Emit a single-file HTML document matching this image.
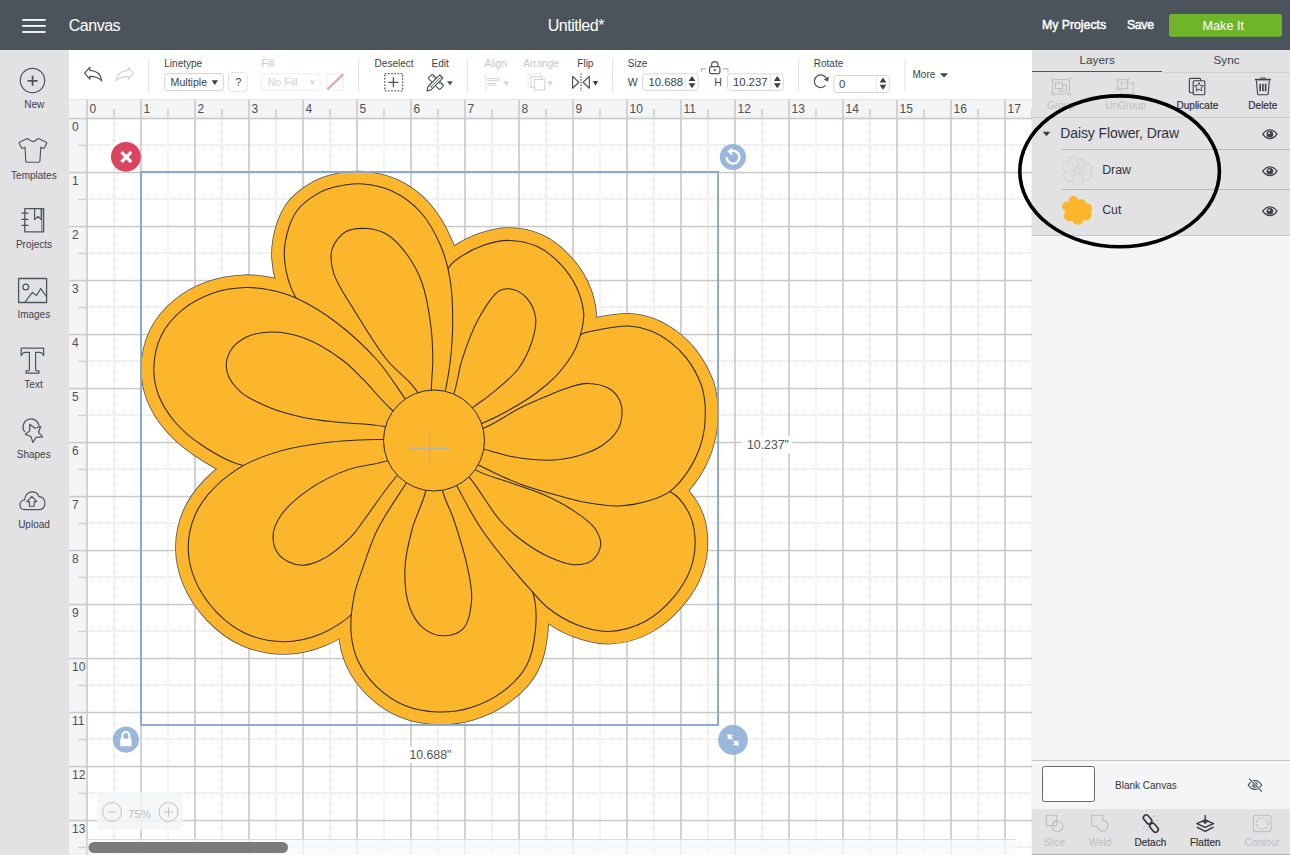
<!DOCTYPE html>
<html><head><meta charset="utf-8">
<style>
*{margin:0;padding:0;box-sizing:border-box}
html,body{width:1290px;height:855px;overflow:hidden;background:#fff;font-family:"Liberation Sans",sans-serif;color:#3a3f45}
.abs{position:absolute}
.t{position:absolute;white-space:nowrap;line-height:1}
#hdr{left:0;top:0;width:1290px;height:50px;background:#4b545c}
#side{left:0;top:50px;width:69px;height:805px;background:#e2e2e4}
#tb{left:69px;top:50px;width:963px;height:50px;background:#fff;border-bottom:1px solid #e3e3e5}
#rp{left:1032px;top:50px;width:258px;height:805px;background:#f4f5f7}
.lbl{position:absolute;white-space:nowrap;line-height:1;font-size:10px;color:#3c4148}
.dis{color:#c3c5c8}
.sico{position:absolute;left:0;width:69px}
.stxt{position:absolute;left:0;width:69px;text-align:center;font-size:10px;color:#3c4148;line-height:1}
.inp{position:absolute;border:1px solid #d9dadc;border-radius:3px;background:#fff}
.sep{position:absolute;top:8px;width:1px;height:34px;background:#e0e0e2}
</style></head>
<body>
<svg class="abs" style="left:0;top:0" width="1290" height="855" viewBox="0 0 1290 855" font-family="Liberation Sans, sans-serif">
<rect x="69" y="100" width="963" height="17.5" fill="#f3f4f6"/>
<rect x="69" y="100" width="17.5" height="755" fill="#f3f4f6"/>
<defs><pattern id="chk" patternUnits="userSpaceOnUse" width="2" height="2"><rect x="0" y="0" width="1" height="1" fill="#e6e6e6"/><rect x="1" y="1" width="1" height="1" fill="#e6e6e6"/></pattern></defs>
<rect x="113" y="117" width="2" height="738" fill="url(#chk)"/>
<rect x="167" y="117" width="2" height="738" fill="url(#chk)"/>
<rect x="221" y="117" width="2" height="738" fill="url(#chk)"/>
<rect x="275" y="117" width="2" height="738" fill="url(#chk)"/>
<rect x="329" y="117" width="2" height="738" fill="url(#chk)"/>
<rect x="383" y="117" width="2" height="738" fill="url(#chk)"/>
<rect x="437" y="117" width="2" height="738" fill="url(#chk)"/>
<rect x="491" y="117" width="2" height="738" fill="url(#chk)"/>
<rect x="545" y="117" width="2" height="738" fill="url(#chk)"/>
<rect x="599" y="117" width="2" height="738" fill="url(#chk)"/>
<rect x="653" y="117" width="2" height="738" fill="url(#chk)"/>
<rect x="707" y="117" width="2" height="738" fill="url(#chk)"/>
<rect x="761" y="117" width="2" height="738" fill="url(#chk)"/>
<rect x="815" y="117" width="2" height="738" fill="url(#chk)"/>
<rect x="869" y="117" width="2" height="738" fill="url(#chk)"/>
<rect x="923" y="117" width="2" height="738" fill="url(#chk)"/>
<rect x="977" y="117" width="2" height="738" fill="url(#chk)"/>
<rect x="1031" y="117" width="2" height="738" fill="url(#chk)"/>
<rect x="87" y="144" width="945" height="2" fill="url(#chk)"/>
<rect x="87" y="198" width="945" height="2" fill="url(#chk)"/>
<rect x="87" y="252" width="945" height="2" fill="url(#chk)"/>
<rect x="87" y="306" width="945" height="2" fill="url(#chk)"/>
<rect x="87" y="360" width="945" height="2" fill="url(#chk)"/>
<rect x="87" y="414" width="945" height="2" fill="url(#chk)"/>
<rect x="87" y="468" width="945" height="2" fill="url(#chk)"/>
<rect x="87" y="522" width="945" height="2" fill="url(#chk)"/>
<rect x="87" y="576" width="945" height="2" fill="url(#chk)"/>
<rect x="87" y="630" width="945" height="2" fill="url(#chk)"/>
<rect x="87" y="684" width="945" height="2" fill="url(#chk)"/>
<rect x="87" y="738" width="945" height="2" fill="url(#chk)"/>
<rect x="87" y="792" width="945" height="2" fill="url(#chk)"/>
<rect x="87" y="846" width="945" height="2" fill="url(#chk)"/>
<rect x="87" y="116.5" width="945" height="2" fill="url(#chk)"/>
<rect x="86" y="100" width="2" height="755" fill="#d2d2d2"/>
<rect x="140" y="100" width="2" height="755" fill="#d2d2d2"/>
<rect x="194" y="100" width="2" height="755" fill="#d2d2d2"/>
<rect x="248" y="100" width="2" height="755" fill="#d2d2d2"/>
<rect x="302" y="100" width="2" height="755" fill="#d2d2d2"/>
<rect x="356" y="100" width="2" height="755" fill="#d2d2d2"/>
<rect x="410" y="100" width="2" height="755" fill="#d2d2d2"/>
<rect x="464" y="100" width="2" height="755" fill="#d2d2d2"/>
<rect x="518" y="100" width="2" height="755" fill="#d2d2d2"/>
<rect x="572" y="100" width="2" height="755" fill="#d2d2d2"/>
<rect x="626" y="100" width="2" height="755" fill="#d2d2d2"/>
<rect x="680" y="100" width="2" height="755" fill="#d2d2d2"/>
<rect x="734" y="100" width="2" height="755" fill="#d2d2d2"/>
<rect x="788" y="100" width="2" height="755" fill="#d2d2d2"/>
<rect x="842" y="100" width="2" height="755" fill="#d2d2d2"/>
<rect x="896" y="100" width="2" height="755" fill="#d2d2d2"/>
<rect x="950" y="100" width="2" height="755" fill="#d2d2d2"/>
<rect x="1004" y="100" width="2" height="755" fill="#d2d2d2"/>
<rect x="69" y="117.8" width="963" height="1.5" fill="#c9c9c9"/>
<rect x="69" y="171.8" width="963" height="1.5" fill="#c9c9c9"/>
<rect x="69" y="225.8" width="963" height="1.5" fill="#c9c9c9"/>
<rect x="69" y="279.8" width="963" height="1.5" fill="#c9c9c9"/>
<rect x="69" y="333.8" width="963" height="1.5" fill="#c9c9c9"/>
<rect x="69" y="387.8" width="963" height="1.5" fill="#c9c9c9"/>
<rect x="69" y="441.8" width="963" height="1.5" fill="#c9c9c9"/>
<rect x="69" y="495.8" width="963" height="1.5" fill="#c9c9c9"/>
<rect x="69" y="549.8" width="963" height="1.5" fill="#c9c9c9"/>
<rect x="69" y="603.8" width="963" height="1.5" fill="#c9c9c9"/>
<rect x="69" y="657.8" width="963" height="1.5" fill="#c9c9c9"/>
<rect x="69" y="711.8" width="963" height="1.5" fill="#c9c9c9"/>
<rect x="69" y="765.8" width="963" height="1.5" fill="#c9c9c9"/>
<rect x="69" y="819.8" width="963" height="1.5" fill="#c9c9c9"/>
<rect x="113.2" y="109" width="1.6" height="8.5" fill="#d0d0d0"/>
<rect x="167.2" y="109" width="1.6" height="8.5" fill="#d0d0d0"/>
<rect x="221.2" y="109" width="1.6" height="8.5" fill="#d0d0d0"/>
<rect x="275.2" y="109" width="1.6" height="8.5" fill="#d0d0d0"/>
<rect x="329.2" y="109" width="1.6" height="8.5" fill="#d0d0d0"/>
<rect x="383.2" y="109" width="1.6" height="8.5" fill="#d0d0d0"/>
<rect x="437.2" y="109" width="1.6" height="8.5" fill="#d0d0d0"/>
<rect x="491.2" y="109" width="1.6" height="8.5" fill="#d0d0d0"/>
<rect x="545.2" y="109" width="1.6" height="8.5" fill="#d0d0d0"/>
<rect x="599.2" y="109" width="1.6" height="8.5" fill="#d0d0d0"/>
<rect x="653.2" y="109" width="1.6" height="8.5" fill="#d0d0d0"/>
<rect x="707.2" y="109" width="1.6" height="8.5" fill="#d0d0d0"/>
<rect x="761.2" y="109" width="1.6" height="8.5" fill="#d0d0d0"/>
<rect x="815.2" y="109" width="1.6" height="8.5" fill="#d0d0d0"/>
<rect x="869.2" y="109" width="1.6" height="8.5" fill="#d0d0d0"/>
<rect x="923.2" y="109" width="1.6" height="8.5" fill="#d0d0d0"/>
<rect x="977.2" y="109" width="1.6" height="8.5" fill="#d0d0d0"/>
<rect x="1031.2" y="109" width="1.6" height="8.5" fill="#d0d0d0"/>
<rect x="78" y="144.8" width="9" height="1.4" fill="#d0d0d0"/>
<rect x="78" y="198.8" width="9" height="1.4" fill="#d0d0d0"/>
<rect x="78" y="252.8" width="9" height="1.4" fill="#d0d0d0"/>
<rect x="78" y="306.8" width="9" height="1.4" fill="#d0d0d0"/>
<rect x="78" y="360.8" width="9" height="1.4" fill="#d0d0d0"/>
<rect x="78" y="414.8" width="9" height="1.4" fill="#d0d0d0"/>
<rect x="78" y="468.8" width="9" height="1.4" fill="#d0d0d0"/>
<rect x="78" y="522.8" width="9" height="1.4" fill="#d0d0d0"/>
<rect x="78" y="576.8" width="9" height="1.4" fill="#d0d0d0"/>
<rect x="78" y="630.8" width="9" height="1.4" fill="#d0d0d0"/>
<rect x="78" y="684.8" width="9" height="1.4" fill="#d0d0d0"/>
<rect x="78" y="738.8" width="9" height="1.4" fill="#d0d0d0"/>
<rect x="78" y="792.8" width="9" height="1.4" fill="#d0d0d0"/>
<rect x="78" y="846.8" width="9" height="1.4" fill="#d0d0d0"/>
<rect x="69" y="100" width="17" height="17" fill="#f3f4f6"/>
<text x="89.5" y="113" font-size="12" fill="#505050">0</text>
<text x="143.5" y="113" font-size="12" fill="#505050">1</text>
<text x="197.5" y="113" font-size="12" fill="#505050">2</text>
<text x="251.5" y="113" font-size="12" fill="#505050">3</text>
<text x="305.5" y="113" font-size="12" fill="#505050">4</text>
<text x="359.5" y="113" font-size="12" fill="#505050">5</text>
<text x="413.5" y="113" font-size="12" fill="#505050">6</text>
<text x="467.5" y="113" font-size="12" fill="#505050">7</text>
<text x="521.5" y="113" font-size="12" fill="#505050">8</text>
<text x="575.5" y="113" font-size="12" fill="#505050">9</text>
<text x="629.5" y="113" font-size="12" fill="#505050">10</text>
<text x="683.5" y="113" font-size="12" fill="#505050">11</text>
<text x="737.5" y="113" font-size="12" fill="#505050">12</text>
<text x="791.5" y="113" font-size="12" fill="#505050">13</text>
<text x="845.5" y="113" font-size="12" fill="#505050">14</text>
<text x="899.5" y="113" font-size="12" fill="#505050">15</text>
<text x="953.5" y="113" font-size="12" fill="#505050">16</text>
<text x="1007.5" y="113" font-size="12" fill="#505050">17</text>
<text x="72" y="130.5" font-size="12" fill="#505050">0</text>
<text x="72" y="184.5" font-size="12" fill="#505050">1</text>
<text x="72" y="238.5" font-size="12" fill="#505050">2</text>
<text x="72" y="292.5" font-size="12" fill="#505050">3</text>
<text x="72" y="346.5" font-size="12" fill="#505050">4</text>
<text x="72" y="400.5" font-size="12" fill="#505050">5</text>
<text x="72" y="454.5" font-size="12" fill="#505050">6</text>
<text x="72" y="508.5" font-size="12" fill="#505050">7</text>
<text x="72" y="562.5" font-size="12" fill="#505050">8</text>
<text x="72" y="616.5" font-size="12" fill="#505050">9</text>
<text x="72" y="670.5" font-size="12" fill="#505050">10</text>
<text x="72" y="724.5" font-size="12" fill="#505050">11</text>
<text x="72" y="778.5" font-size="12" fill="#505050">12</text>
<text x="72" y="832.5" font-size="12" fill="#505050">13</text>
<g fill="none" stroke-linejoin="miter" stroke-miterlimit="20">
<path d="M434.00,440.50 C437.62,432.77 414.67,412.14 405.00,398.50 C395.67,385.33 387.99,372.31 377.00,360.00 C364.98,346.54 349.29,332.18 335.00,321.50 C322.23,311.95 307.99,303.36 296.00,298.00 C286.73,293.86 278.67,291.75 270.00,290.00 C261.67,288.32 253.89,287.16 245.00,287.50 C234.74,287.90 222.42,289.70 212.00,293.40 C201.52,297.12 190.78,302.73 182.30,309.80 C173.91,316.80 166.05,325.80 161.30,335.50 C156.52,345.25 154.02,357.69 153.80,368.20 C153.59,377.90 155.57,387.45 159.00,396.30 C162.53,405.41 168.35,414.18 175.00,422.00 C182.03,430.27 190.44,437.55 200.50,444.30 C212.36,452.25 227.72,462.34 242.60,465.30 C257.55,468.28 274.02,463.67 290.00,462.00 C306.47,460.28 323.93,457.95 340.00,455.00 C355.20,452.21 368.78,447.40 384.00,445.00 C400.05,442.47 430.41,448.17 434.00,440.50Z" stroke="#555" stroke-width="26.2"/>
<path d="M434.00,440.50 C426.41,443.72 411.93,430.45 400.00,420.00 C381.44,403.75 358.85,366.78 340.00,345.00 C324.56,327.17 305.20,314.15 296.00,298.00 C288.62,285.04 285.29,270.64 284.40,258.20 C283.64,247.53 285.98,236.68 288.70,228.00 C290.95,220.81 294.03,214.55 298.10,209.30 C301.93,204.36 307.24,200.46 312.10,197.10 C316.60,193.99 320.96,191.57 326.10,189.60 C331.76,187.43 338.52,185.93 344.80,185.00 C350.99,184.08 356.67,183.36 363.50,184.00 C372.04,184.81 382.85,186.79 391.90,191.00 C401.77,195.60 412.03,202.78 420.00,211.50 C428.64,220.95 435.89,234.46 441.00,246.50 C445.82,257.86 448.43,269.26 450.40,281.60 C452.52,294.89 452.76,310.19 452.70,323.70 C452.65,336.25 451.70,348.41 450.40,360.00 C449.19,370.77 447.65,379.50 445.40,391.00 C442.54,405.62 442.59,436.86 434.00,440.50Z" stroke="#555" stroke-width="26.2"/>
<path d="M434.00,440.50 C427.45,435.74 434.26,415.33 435.00,400.00 C435.97,379.83 437.73,352.52 440.00,330.00 C442.13,308.88 441.65,281.06 448.00,268.80 C451.53,261.99 456.55,259.65 462.00,255.90 C468.06,251.72 475.54,247.97 483.10,245.40 C491.05,242.70 499.97,240.34 508.70,240.40 C517.85,240.46 528.25,242.43 536.80,246.30 C545.43,250.20 553.56,256.93 560.20,263.80 C566.76,270.59 572.57,278.86 576.50,287.20 C580.30,295.26 583.01,306.21 583.70,312.90 C584.13,317.06 583.50,319.69 583.00,323.20 C582.47,326.95 581.66,330.71 580.50,334.70 C579.19,339.23 577.46,344.39 575.30,348.90 C573.15,353.38 570.51,357.52 567.60,361.70 C564.54,366.09 561.18,370.45 557.30,374.60 C553.12,379.07 548.12,383.44 543.20,387.50 C538.26,391.58 534.43,394.73 527.70,399.00 C516.65,406.01 497.61,416.66 481.90,423.60 C466.37,430.46 441.34,445.83 434.00,440.50Z" stroke="#555" stroke-width="26.2"/>
<path d="M434.00,440.50 C433.79,426.71 495.70,406.73 520.00,390.00 C539.47,376.60 560.12,360.78 570.00,350.00 C575.24,344.28 575.28,338.41 580.00,335.00 C585.07,331.34 592.71,330.95 600.00,329.50 C608.52,327.81 619.44,325.68 628.10,326.00 C635.63,326.28 642.29,327.67 649.10,330.20 C656.35,332.89 663.86,337.29 670.20,342.10 C676.48,346.87 682.05,352.33 687.00,358.90 C692.46,366.15 698.09,376.57 701.00,384.20 C703.18,389.91 703.89,394.77 704.60,400.00 C705.29,405.03 705.37,410.00 705.30,415.00 C705.23,420.00 705.01,424.88 704.20,430.00 C703.32,435.53 702.18,441.01 700.00,447.00 C697.33,454.31 693.37,463.11 688.50,470.40 C683.45,477.95 676.99,486.26 670.00,491.40 C663.65,496.07 656.74,498.44 648.90,500.80 C639.84,503.53 629.02,505.62 618.50,505.90 C607.24,506.20 593.86,503.78 583.40,501.90 C574.76,500.34 568.80,498.52 560.00,496.10 C548.41,492.91 533.17,488.98 520.00,484.00 C506.49,478.89 493.67,472.56 480.00,465.70 C465.07,458.21 434.15,450.50 434.00,440.50Z" stroke="#555" stroke-width="26.2"/>
<path d="M434.00,440.50 C442.56,430.41 522.42,471.83 560.00,480.00 C589.36,486.38 619.54,487.99 640.00,490.00 C652.68,491.24 662.67,488.12 670.90,492.20 C678.51,495.97 684.38,504.50 688.40,512.10 C692.42,519.70 694.49,528.82 695.00,537.80 C695.55,547.46 694.13,558.58 690.80,568.20 C687.38,578.11 681.62,587.70 674.40,596.30 C666.41,605.81 655.21,616.14 644.00,622.00 C633.29,627.60 620.44,631.10 608.90,631.40 C597.82,631.68 586.31,628.36 576.10,624.40 C566.06,620.51 555.61,613.86 548.10,608.00 C542.10,603.32 539.71,600.04 533.60,593.20 C521.47,579.63 495.52,549.53 482.10,530.00 C471.66,514.81 465.51,501.88 457.60,487.20 C449.46,472.08 428.61,446.85 434.00,440.50Z" stroke="#555" stroke-width="26.2"/>
<path d="M434.00,440.50 C451.12,440.00 482.54,501.82 500.00,530.00 C514.21,552.93 528.51,576.56 533.60,595.50 C537.12,608.58 536.55,618.99 535.40,630.60 C534.23,642.39 531.99,655.49 526.50,665.70 C521.12,675.70 512.29,684.43 503.10,691.40 C493.67,698.55 481.61,704.38 470.40,707.80 C459.74,711.05 448.49,712.38 437.60,712.00 C426.66,711.62 415.01,709.67 404.90,705.50 C394.73,701.30 384.67,694.36 376.80,686.80 C369.15,679.45 362.40,670.22 358.10,661.00 C354.01,652.23 351.92,643.09 351.10,633.00 C350.16,621.48 351.89,607.22 354.20,595.50 C356.32,584.71 360.16,575.54 363.80,565.10 C367.75,553.76 371.16,542.20 377.20,530.00 C384.46,515.33 396.21,498.90 405.80,483.80 C415.15,469.08 422.33,440.84 434.00,440.50Z" stroke="#555" stroke-width="26.2"/>
<path d="M434.00,440.50 C441.92,454.12 392.80,510.50 380.00,540.00 C370.43,562.05 365.67,587.30 360.00,600.00 C357.19,606.29 356.49,609.05 352.30,613.50 C345.85,620.36 332.69,629.01 321.40,633.70 C309.87,638.50 296.26,641.70 283.70,641.70 C271.16,641.70 257.41,638.75 246.10,633.70 C235.06,628.77 224.94,620.90 216.50,612.10 C207.83,603.06 199.72,591.12 195.00,579.90 C190.64,569.54 188.20,558.37 188.20,547.60 C188.20,536.83 190.72,525.18 195.00,515.30 C199.27,505.45 206.09,496.47 213.80,488.40 C222.03,479.78 232.46,471.80 243.40,465.60 C254.77,459.15 268.06,454.53 281.00,450.80 C294.05,447.04 309.06,444.94 321.40,443.20 C331.72,441.75 340.12,441.12 350.00,440.50 C360.60,439.84 370.81,439.57 383.00,439.50 C398.16,439.42 428.68,431.36 434.00,440.50Z" stroke="#555" stroke-width="26.2"/>
<path d="M434.00,440.50 C437.62,432.77 414.67,412.14 405.00,398.50 C395.67,385.33 387.99,372.31 377.00,360.00 C364.98,346.54 349.29,332.18 335.00,321.50 C322.23,311.95 307.99,303.36 296.00,298.00 C286.73,293.86 278.67,291.75 270.00,290.00 C261.67,288.32 253.89,287.16 245.00,287.50 C234.74,287.90 222.42,289.70 212.00,293.40 C201.52,297.12 190.78,302.73 182.30,309.80 C173.91,316.80 166.05,325.80 161.30,335.50 C156.52,345.25 154.02,357.69 153.80,368.20 C153.59,377.90 155.57,387.45 159.00,396.30 C162.53,405.41 168.35,414.18 175.00,422.00 C182.03,430.27 190.44,437.55 200.50,444.30 C212.36,452.25 227.72,462.34 242.60,465.30 C257.55,468.28 274.02,463.67 290.00,462.00 C306.47,460.28 323.93,457.95 340.00,455.00 C355.20,452.21 368.78,447.40 384.00,445.00 C400.05,442.47 430.41,448.17 434.00,440.50Z" stroke="#fbb62c" stroke-width="24.6"/>
<path d="M434.00,440.50 C426.41,443.72 411.93,430.45 400.00,420.00 C381.44,403.75 358.85,366.78 340.00,345.00 C324.56,327.17 305.20,314.15 296.00,298.00 C288.62,285.04 285.29,270.64 284.40,258.20 C283.64,247.53 285.98,236.68 288.70,228.00 C290.95,220.81 294.03,214.55 298.10,209.30 C301.93,204.36 307.24,200.46 312.10,197.10 C316.60,193.99 320.96,191.57 326.10,189.60 C331.76,187.43 338.52,185.93 344.80,185.00 C350.99,184.08 356.67,183.36 363.50,184.00 C372.04,184.81 382.85,186.79 391.90,191.00 C401.77,195.60 412.03,202.78 420.00,211.50 C428.64,220.95 435.89,234.46 441.00,246.50 C445.82,257.86 448.43,269.26 450.40,281.60 C452.52,294.89 452.76,310.19 452.70,323.70 C452.65,336.25 451.70,348.41 450.40,360.00 C449.19,370.77 447.65,379.50 445.40,391.00 C442.54,405.62 442.59,436.86 434.00,440.50Z" stroke="#fbb62c" stroke-width="24.6"/>
<path d="M434.00,440.50 C427.45,435.74 434.26,415.33 435.00,400.00 C435.97,379.83 437.73,352.52 440.00,330.00 C442.13,308.88 441.65,281.06 448.00,268.80 C451.53,261.99 456.55,259.65 462.00,255.90 C468.06,251.72 475.54,247.97 483.10,245.40 C491.05,242.70 499.97,240.34 508.70,240.40 C517.85,240.46 528.25,242.43 536.80,246.30 C545.43,250.20 553.56,256.93 560.20,263.80 C566.76,270.59 572.57,278.86 576.50,287.20 C580.30,295.26 583.01,306.21 583.70,312.90 C584.13,317.06 583.50,319.69 583.00,323.20 C582.47,326.95 581.66,330.71 580.50,334.70 C579.19,339.23 577.46,344.39 575.30,348.90 C573.15,353.38 570.51,357.52 567.60,361.70 C564.54,366.09 561.18,370.45 557.30,374.60 C553.12,379.07 548.12,383.44 543.20,387.50 C538.26,391.58 534.43,394.73 527.70,399.00 C516.65,406.01 497.61,416.66 481.90,423.60 C466.37,430.46 441.34,445.83 434.00,440.50Z" stroke="#fbb62c" stroke-width="24.6"/>
<path d="M434.00,440.50 C433.79,426.71 495.70,406.73 520.00,390.00 C539.47,376.60 560.12,360.78 570.00,350.00 C575.24,344.28 575.28,338.41 580.00,335.00 C585.07,331.34 592.71,330.95 600.00,329.50 C608.52,327.81 619.44,325.68 628.10,326.00 C635.63,326.28 642.29,327.67 649.10,330.20 C656.35,332.89 663.86,337.29 670.20,342.10 C676.48,346.87 682.05,352.33 687.00,358.90 C692.46,366.15 698.09,376.57 701.00,384.20 C703.18,389.91 703.89,394.77 704.60,400.00 C705.29,405.03 705.37,410.00 705.30,415.00 C705.23,420.00 705.01,424.88 704.20,430.00 C703.32,435.53 702.18,441.01 700.00,447.00 C697.33,454.31 693.37,463.11 688.50,470.40 C683.45,477.95 676.99,486.26 670.00,491.40 C663.65,496.07 656.74,498.44 648.90,500.80 C639.84,503.53 629.02,505.62 618.50,505.90 C607.24,506.20 593.86,503.78 583.40,501.90 C574.76,500.34 568.80,498.52 560.00,496.10 C548.41,492.91 533.17,488.98 520.00,484.00 C506.49,478.89 493.67,472.56 480.00,465.70 C465.07,458.21 434.15,450.50 434.00,440.50Z" stroke="#fbb62c" stroke-width="24.6"/>
<path d="M434.00,440.50 C442.56,430.41 522.42,471.83 560.00,480.00 C589.36,486.38 619.54,487.99 640.00,490.00 C652.68,491.24 662.67,488.12 670.90,492.20 C678.51,495.97 684.38,504.50 688.40,512.10 C692.42,519.70 694.49,528.82 695.00,537.80 C695.55,547.46 694.13,558.58 690.80,568.20 C687.38,578.11 681.62,587.70 674.40,596.30 C666.41,605.81 655.21,616.14 644.00,622.00 C633.29,627.60 620.44,631.10 608.90,631.40 C597.82,631.68 586.31,628.36 576.10,624.40 C566.06,620.51 555.61,613.86 548.10,608.00 C542.10,603.32 539.71,600.04 533.60,593.20 C521.47,579.63 495.52,549.53 482.10,530.00 C471.66,514.81 465.51,501.88 457.60,487.20 C449.46,472.08 428.61,446.85 434.00,440.50Z" stroke="#fbb62c" stroke-width="24.6"/>
<path d="M434.00,440.50 C451.12,440.00 482.54,501.82 500.00,530.00 C514.21,552.93 528.51,576.56 533.60,595.50 C537.12,608.58 536.55,618.99 535.40,630.60 C534.23,642.39 531.99,655.49 526.50,665.70 C521.12,675.70 512.29,684.43 503.10,691.40 C493.67,698.55 481.61,704.38 470.40,707.80 C459.74,711.05 448.49,712.38 437.60,712.00 C426.66,711.62 415.01,709.67 404.90,705.50 C394.73,701.30 384.67,694.36 376.80,686.80 C369.15,679.45 362.40,670.22 358.10,661.00 C354.01,652.23 351.92,643.09 351.10,633.00 C350.16,621.48 351.89,607.22 354.20,595.50 C356.32,584.71 360.16,575.54 363.80,565.10 C367.75,553.76 371.16,542.20 377.20,530.00 C384.46,515.33 396.21,498.90 405.80,483.80 C415.15,469.08 422.33,440.84 434.00,440.50Z" stroke="#fbb62c" stroke-width="24.6"/>
<path d="M434.00,440.50 C441.92,454.12 392.80,510.50 380.00,540.00 C370.43,562.05 365.67,587.30 360.00,600.00 C357.19,606.29 356.49,609.05 352.30,613.50 C345.85,620.36 332.69,629.01 321.40,633.70 C309.87,638.50 296.26,641.70 283.70,641.70 C271.16,641.70 257.41,638.75 246.10,633.70 C235.06,628.77 224.94,620.90 216.50,612.10 C207.83,603.06 199.72,591.12 195.00,579.90 C190.64,569.54 188.20,558.37 188.20,547.60 C188.20,536.83 190.72,525.18 195.00,515.30 C199.27,505.45 206.09,496.47 213.80,488.40 C222.03,479.78 232.46,471.80 243.40,465.60 C254.77,459.15 268.06,454.53 281.00,450.80 C294.05,447.04 309.06,444.94 321.40,443.20 C331.72,441.75 340.12,441.12 350.00,440.50 C360.60,439.84 370.81,439.57 383.00,439.50 C398.16,439.42 428.68,431.36 434.00,440.50Z" stroke="#fbb62c" stroke-width="24.6"/>
</g>
<path d="M434.00,440.50 C441.92,454.12 392.80,510.50 380.00,540.00 C370.43,562.05 365.67,587.30 360.00,600.00 C357.19,606.29 356.49,609.05 352.30,613.50 C345.85,620.36 332.69,629.01 321.40,633.70 C309.87,638.50 296.26,641.70 283.70,641.70 C271.16,641.70 257.41,638.75 246.10,633.70 C235.06,628.77 224.94,620.90 216.50,612.10 C207.83,603.06 199.72,591.12 195.00,579.90 C190.64,569.54 188.20,558.37 188.20,547.60 C188.20,536.83 190.72,525.18 195.00,515.30 C199.27,505.45 206.09,496.47 213.80,488.40 C222.03,479.78 232.46,471.80 243.40,465.60 C254.77,459.15 268.06,454.53 281.00,450.80 C294.05,447.04 309.06,444.94 321.40,443.20 C331.72,441.75 340.12,441.12 350.00,440.50 C360.60,439.84 370.81,439.57 383.00,439.50 C398.16,439.42 428.68,431.36 434.00,440.50Z" fill="#fbb62c" stroke="#2e2a22" stroke-width="1.05"/>
<path d="M434.00,440.50 C435.67,443.02 408.31,463.00 396.80,476.00 C384.91,489.43 372.49,508.83 364.00,520.00 C358.72,526.95 356.67,531.14 351.00,536.80 C343.48,544.32 330.95,555.06 321.40,559.70 C314.05,563.27 306.84,565.76 299.90,565.10 C292.94,564.44 284.19,560.63 279.70,555.70 C275.44,551.02 272.95,543.29 273.00,536.80 C273.05,529.85 276.26,522.30 281.00,515.30 C287.26,506.05 299.56,495.95 310.60,488.40 C321.93,480.65 335.41,474.19 348.30,469.60 C360.73,465.17 373.28,465.30 386.50,461.00 C401.69,456.06 432.32,437.97 434.00,440.50Z" fill="none" stroke="#2e2a22" stroke-width="1.05"/>
<path d="M434.00,440.50 C451.12,440.00 482.54,501.82 500.00,530.00 C514.21,552.93 528.51,576.56 533.60,595.50 C537.12,608.58 536.55,618.99 535.40,630.60 C534.23,642.39 531.99,655.49 526.50,665.70 C521.12,675.70 512.29,684.43 503.10,691.40 C493.67,698.55 481.61,704.38 470.40,707.80 C459.74,711.05 448.49,712.38 437.60,712.00 C426.66,711.62 415.01,709.67 404.90,705.50 C394.73,701.30 384.67,694.36 376.80,686.80 C369.15,679.45 362.40,670.22 358.10,661.00 C354.01,652.23 351.92,643.09 351.10,633.00 C350.16,621.48 351.89,607.22 354.20,595.50 C356.32,584.71 360.16,575.54 363.80,565.10 C367.75,553.76 371.16,542.20 377.20,530.00 C384.46,515.33 396.21,498.90 405.80,483.80 C415.15,469.08 422.33,440.84 434.00,440.50Z" fill="#fbb62c" stroke="#2e2a22" stroke-width="1.05"/>
<path d="M434.00,440.50 C436.80,440.49 438.63,476.66 442.60,491.00 C445.70,502.18 450.19,508.93 453.90,520.00 C458.69,534.27 465.07,555.14 468.00,569.80 C470.25,581.08 472.42,590.35 471.60,600.20 C470.80,609.83 468.76,622.41 463.40,628.30 C458.95,633.20 451.06,635.68 444.60,635.80 C437.82,635.92 429.33,632.78 423.60,628.30 C417.49,623.52 412.74,615.67 409.60,607.20 C405.77,596.87 404.59,582.44 404.90,569.80 C405.22,556.72 408.45,543.06 411.90,530.00 C415.39,516.78 422.20,505.01 425.80,491.00 C429.81,475.42 431.20,440.51 434.00,440.50Z" fill="none" stroke="#2e2a22" stroke-width="1.05"/>
<path d="M434.00,440.50 C442.56,430.41 522.42,471.83 560.00,480.00 C589.36,486.38 619.54,487.99 640.00,490.00 C652.68,491.24 662.67,488.12 670.90,492.20 C678.51,495.97 684.38,504.50 688.40,512.10 C692.42,519.70 694.49,528.82 695.00,537.80 C695.55,547.46 694.13,558.58 690.80,568.20 C687.38,578.11 681.62,587.70 674.40,596.30 C666.41,605.81 655.21,616.14 644.00,622.00 C633.29,627.60 620.44,631.10 608.90,631.40 C597.82,631.68 586.31,628.36 576.10,624.40 C566.06,620.51 555.61,613.86 548.10,608.00 C542.10,603.32 539.71,600.04 533.60,593.20 C521.47,579.63 495.52,549.53 482.10,530.00 C471.66,514.81 465.51,501.88 457.60,487.20 C449.46,472.08 428.61,446.85 434.00,440.50Z" fill="#fbb62c" stroke="#2e2a22" stroke-width="1.05"/>
<path d="M434.00,440.50 C435.08,439.25 462.52,463.21 476.30,470.40 C487.76,476.38 498.79,478.56 510.00,482.60 C521.16,486.62 532.70,489.84 543.40,494.60 C553.95,499.29 564.86,504.86 573.80,510.90 C581.78,516.29 590.43,522.07 594.90,528.50 C598.46,533.61 601.11,539.62 600.70,544.90 C600.29,550.16 596.78,556.79 592.50,560.10 C587.99,563.59 580.49,564.93 573.80,564.70 C565.88,564.43 556.61,560.43 548.10,556.50 C538.67,552.14 528.33,545.40 520.00,539.00 C512.36,533.14 506.70,528.01 499.70,520.00 C490.16,509.08 480.74,491.14 469.80,477.90 C458.84,464.64 432.92,441.75 434.00,440.50Z" fill="none" stroke="#2e2a22" stroke-width="1.05"/>
<path d="M434.00,440.50 C433.79,426.71 495.70,406.73 520.00,390.00 C539.47,376.60 560.12,360.78 570.00,350.00 C575.24,344.28 575.28,338.41 580.00,335.00 C585.07,331.34 592.71,330.95 600.00,329.50 C608.52,327.81 619.44,325.68 628.10,326.00 C635.63,326.28 642.29,327.67 649.10,330.20 C656.35,332.89 663.86,337.29 670.20,342.10 C676.48,346.87 682.05,352.33 687.00,358.90 C692.46,366.15 698.09,376.57 701.00,384.20 C703.18,389.91 703.89,394.77 704.60,400.00 C705.29,405.03 705.37,410.00 705.30,415.00 C705.23,420.00 705.01,424.88 704.20,430.00 C703.32,435.53 702.18,441.01 700.00,447.00 C697.33,454.31 693.37,463.11 688.50,470.40 C683.45,477.95 676.99,486.26 670.00,491.40 C663.65,496.07 656.74,498.44 648.90,500.80 C639.84,503.53 629.02,505.62 618.50,505.90 C607.24,506.20 593.86,503.78 583.40,501.90 C574.76,500.34 568.80,498.52 560.00,496.10 C548.41,492.91 533.17,488.98 520.00,484.00 C506.49,478.89 493.67,472.56 480.00,465.70 C465.07,458.21 434.15,450.50 434.00,440.50Z" fill="#fbb62c" stroke="#2e2a22" stroke-width="1.05"/>
<path d="M434.00,440.50 C433.88,436.99 468.33,434.13 483.20,428.30 C496.74,422.99 508.72,413.62 520.00,408.00 C529.23,403.40 537.31,400.00 545.70,396.50 C553.59,393.21 561.46,389.73 568.90,387.50 C575.49,385.53 581.48,383.32 588.00,383.40 C594.87,383.49 603.64,385.24 609.10,388.50 C613.74,391.27 617.46,395.78 619.60,400.20 C621.63,404.40 622.26,409.38 622.00,414.20 C621.71,419.48 620.24,425.63 617.30,430.60 C614.06,436.07 608.38,441.21 602.60,445.20 C596.41,449.47 588.28,452.58 581.00,455.00 C574.07,457.30 567.28,458.78 560.00,459.60 C552.31,460.46 544.14,460.33 536.00,459.80 C527.49,459.25 518.55,457.93 510.00,456.20 C501.45,454.47 494.64,451.60 484.70,449.40 C470.76,446.31 434.12,444.03 434.00,440.50Z" fill="none" stroke="#2e2a22" stroke-width="1.05"/>
<path d="M434.00,440.50 C427.45,435.74 434.26,415.33 435.00,400.00 C435.97,379.83 437.73,352.52 440.00,330.00 C442.13,308.88 441.65,281.06 448.00,268.80 C451.53,261.99 456.55,259.65 462.00,255.90 C468.06,251.72 475.54,247.97 483.10,245.40 C491.05,242.70 499.97,240.34 508.70,240.40 C517.85,240.46 528.25,242.43 536.80,246.30 C545.43,250.20 553.56,256.93 560.20,263.80 C566.76,270.59 572.57,278.86 576.50,287.20 C580.30,295.26 583.01,306.21 583.70,312.90 C584.13,317.06 583.50,319.69 583.00,323.20 C582.47,326.95 581.66,330.71 580.50,334.70 C579.19,339.23 577.46,344.39 575.30,348.90 C573.15,353.38 570.51,357.52 567.60,361.70 C564.54,366.09 561.18,370.45 557.30,374.60 C553.12,379.07 548.12,383.44 543.20,387.50 C538.26,391.58 534.43,394.73 527.70,399.00 C516.65,406.01 497.61,416.66 481.90,423.60 C466.37,430.46 441.34,445.83 434.00,440.50Z" fill="#fbb62c" stroke="#2e2a22" stroke-width="1.05"/>
<path d="M434.00,440.50 C430.86,438.19 449.11,408.21 453.90,393.70 C457.86,381.72 458.29,371.64 462.00,360.00 C466.18,346.86 471.68,331.03 478.40,319.00 C484.40,308.26 492.16,294.74 499.40,290.70 C503.97,288.15 508.93,288.34 513.40,289.50 C518.30,290.77 523.77,294.56 527.40,298.90 C531.39,303.67 534.70,310.88 535.60,317.60 C536.56,324.83 534.61,333.05 532.10,341.00 C529.21,350.14 524.58,360.40 518.10,369.00 C510.94,378.49 498.41,387.85 490.00,394.80 C483.66,400.04 479.43,402.27 472.60,407.70 C462.15,416.00 437.13,442.80 434.00,440.50Z" fill="none" stroke="#2e2a22" stroke-width="1.05"/>
<path d="M434.00,440.50 C426.41,443.72 411.93,430.45 400.00,420.00 C381.44,403.75 358.85,366.78 340.00,345.00 C324.56,327.17 305.20,314.15 296.00,298.00 C288.62,285.04 285.29,270.64 284.40,258.20 C283.64,247.53 285.98,236.68 288.70,228.00 C290.95,220.81 294.03,214.55 298.10,209.30 C301.93,204.36 307.24,200.46 312.10,197.10 C316.60,193.99 320.96,191.57 326.10,189.60 C331.76,187.43 338.52,185.93 344.80,185.00 C350.99,184.08 356.67,183.36 363.50,184.00 C372.04,184.81 382.85,186.79 391.90,191.00 C401.77,195.60 412.03,202.78 420.00,211.50 C428.64,220.95 435.89,234.46 441.00,246.50 C445.82,257.86 448.43,269.26 450.40,281.60 C452.52,294.89 452.76,310.19 452.70,323.70 C452.65,336.25 451.70,348.41 450.40,360.00 C449.19,370.77 447.65,379.50 445.40,391.00 C442.54,405.62 442.59,436.86 434.00,440.50Z" fill="#fbb62c" stroke="#2e2a22" stroke-width="1.05"/>
<path d="M434.00,440.50 C431.68,440.95 425.73,405.74 417.40,392.00 C409.67,379.25 396.62,372.08 387.00,360.00 C376.29,346.55 365.96,329.47 356.80,314.40 C348.20,300.25 336.94,284.65 333.40,272.30 C330.93,263.68 330.03,255.74 332.20,248.90 C334.29,242.31 339.77,235.19 345.60,231.80 C351.46,228.40 360.20,228.03 367.30,228.60 C374.40,229.17 381.87,231.30 388.20,235.20 C395.18,239.50 401.37,246.90 406.80,254.30 C412.72,262.37 417.94,271.67 421.80,282.20 C426.26,294.39 428.78,310.26 430.60,323.70 C432.29,336.14 432.72,348.47 432.80,360.00 C432.87,370.47 431.37,378.71 431.40,390.00 C431.44,404.65 436.30,440.06 434.00,440.50Z" fill="none" stroke="#2e2a22" stroke-width="1.05"/>
<path d="M434.00,440.50 C437.62,432.77 414.67,412.14 405.00,398.50 C395.67,385.33 387.99,372.31 377.00,360.00 C364.98,346.54 349.29,332.18 335.00,321.50 C322.23,311.95 307.99,303.36 296.00,298.00 C286.73,293.86 278.67,291.75 270.00,290.00 C261.67,288.32 253.89,287.16 245.00,287.50 C234.74,287.90 222.42,289.70 212.00,293.40 C201.52,297.12 190.78,302.73 182.30,309.80 C173.91,316.80 166.05,325.80 161.30,335.50 C156.52,345.25 154.02,357.69 153.80,368.20 C153.59,377.90 155.57,387.45 159.00,396.30 C162.53,405.41 168.35,414.18 175.00,422.00 C182.03,430.27 190.44,437.55 200.50,444.30 C212.36,452.25 227.72,462.34 242.60,465.30 C257.55,468.28 274.02,463.67 290.00,462.00 C306.47,460.28 323.93,457.95 340.00,455.00 C355.20,452.21 368.78,447.40 384.00,445.00 C400.05,442.47 430.41,448.17 434.00,440.50Z" fill="#fbb62c" stroke="#2e2a22" stroke-width="1.05"/>
<path d="M434.00,440.50 C435.32,437.80 404.21,420.76 392.00,410.00 C381.07,400.37 372.42,388.59 363.50,379.70 C356.07,372.29 350.94,366.29 342.40,360.00 C331.75,352.16 316.22,342.43 303.40,337.80 C292.37,333.82 280.93,331.77 270.70,332.00 C261.57,332.21 252.06,333.84 244.90,337.80 C238.21,341.50 231.41,347.97 228.60,354.20 C226.07,359.81 225.75,366.94 227.40,372.90 C229.22,379.46 234.25,386.17 240.30,391.60 C247.77,398.29 260.14,403.69 270.70,408.00 C281.18,412.28 292.51,415.05 303.40,417.40 C313.95,419.67 323.26,420.63 335.00,422.00 C349.66,423.72 368.23,423.37 384.60,426.40 C401.23,429.48 432.69,443.19 434.00,440.50Z" fill="none" stroke="#2e2a22" stroke-width="1.05"/>
<clipPath id="clbl"><polygon points="150,300 434,300 434,440.5 380,470 150,520"/></clipPath>
<g clip-path="url(#clbl)"><path d="M434.00,440.50 C441.92,454.12 392.80,510.50 380.00,540.00 C370.43,562.05 365.67,587.30 360.00,600.00 C357.19,606.29 356.49,609.05 352.30,613.50 C345.85,620.36 332.69,629.01 321.40,633.70 C309.87,638.50 296.26,641.70 283.70,641.70 C271.16,641.70 257.41,638.75 246.10,633.70 C235.06,628.77 224.94,620.90 216.50,612.10 C207.83,603.06 199.72,591.12 195.00,579.90 C190.64,569.54 188.20,558.37 188.20,547.60 C188.20,536.83 190.72,525.18 195.00,515.30 C199.27,505.45 206.09,496.47 213.80,488.40 C222.03,479.78 232.46,471.80 243.40,465.60 C254.77,459.15 268.06,454.53 281.00,450.80 C294.05,447.04 309.06,444.94 321.40,443.20 C331.72,441.75 340.12,441.12 350.00,440.50 C360.60,439.84 370.81,439.57 383.00,439.50 C398.16,439.42 428.68,431.36 434.00,440.50Z" fill="#fbb62c" stroke="#2e2a22" stroke-width="1"/><path d="M434.00,440.50 C435.67,443.02 408.31,463.00 396.80,476.00 C384.91,489.43 372.49,508.83 364.00,520.00 C358.72,526.95 356.67,531.14 351.00,536.80 C343.48,544.32 330.95,555.06 321.40,559.70 C314.05,563.27 306.84,565.76 299.90,565.10 C292.94,564.44 284.19,560.63 279.70,555.70 C275.44,551.02 272.95,543.29 273.00,536.80 C273.05,529.85 276.26,522.30 281.00,515.30 C287.26,506.05 299.56,495.95 310.60,488.40 C321.93,480.65 335.41,474.19 348.30,469.60 C360.73,465.17 373.28,465.30 386.50,461.00 C401.69,456.06 432.32,437.97 434.00,440.50Z" fill="none" stroke="#2e2a22" stroke-width="1"/></g>
<circle cx="434" cy="440.5" r="50.5" fill="#fbb62c" stroke="#2e2a22" stroke-width="1"/>
<path d="M429.5,428.3V468.2M409.5,448.3H449.5" stroke="#b9b4a8" stroke-width="1.2"/>
<defs><g id="silh" transform="translate(-141,-172)">
<path d="M434.00,440.50 C437.62,432.77 414.67,412.14 405.00,398.50 C395.67,385.33 387.99,372.31 377.00,360.00 C364.98,346.54 349.29,332.18 335.00,321.50 C322.23,311.95 307.99,303.36 296.00,298.00 C286.73,293.86 278.67,291.75 270.00,290.00 C261.67,288.32 253.89,287.16 245.00,287.50 C234.74,287.90 222.42,289.70 212.00,293.40 C201.52,297.12 190.78,302.73 182.30,309.80 C173.91,316.80 166.05,325.80 161.30,335.50 C156.52,345.25 154.02,357.69 153.80,368.20 C153.59,377.90 155.57,387.45 159.00,396.30 C162.53,405.41 168.35,414.18 175.00,422.00 C182.03,430.27 190.44,437.55 200.50,444.30 C212.36,452.25 227.72,462.34 242.60,465.30 C257.55,468.28 274.02,463.67 290.00,462.00 C306.47,460.28 323.93,457.95 340.00,455.00 C355.20,452.21 368.78,447.40 384.00,445.00 C400.05,442.47 430.41,448.17 434.00,440.50Z" fill="#fbb62c" stroke="#fbb62c" stroke-width="24.6" stroke-linejoin="miter"/>
<path d="M434.00,440.50 C426.41,443.72 411.93,430.45 400.00,420.00 C381.44,403.75 358.85,366.78 340.00,345.00 C324.56,327.17 305.20,314.15 296.00,298.00 C288.62,285.04 285.29,270.64 284.40,258.20 C283.64,247.53 285.98,236.68 288.70,228.00 C290.95,220.81 294.03,214.55 298.10,209.30 C301.93,204.36 307.24,200.46 312.10,197.10 C316.60,193.99 320.96,191.57 326.10,189.60 C331.76,187.43 338.52,185.93 344.80,185.00 C350.99,184.08 356.67,183.36 363.50,184.00 C372.04,184.81 382.85,186.79 391.90,191.00 C401.77,195.60 412.03,202.78 420.00,211.50 C428.64,220.95 435.89,234.46 441.00,246.50 C445.82,257.86 448.43,269.26 450.40,281.60 C452.52,294.89 452.76,310.19 452.70,323.70 C452.65,336.25 451.70,348.41 450.40,360.00 C449.19,370.77 447.65,379.50 445.40,391.00 C442.54,405.62 442.59,436.86 434.00,440.50Z" fill="#fbb62c" stroke="#fbb62c" stroke-width="24.6" stroke-linejoin="miter"/>
<path d="M434.00,440.50 C427.45,435.74 434.26,415.33 435.00,400.00 C435.97,379.83 437.73,352.52 440.00,330.00 C442.13,308.88 441.65,281.06 448.00,268.80 C451.53,261.99 456.55,259.65 462.00,255.90 C468.06,251.72 475.54,247.97 483.10,245.40 C491.05,242.70 499.97,240.34 508.70,240.40 C517.85,240.46 528.25,242.43 536.80,246.30 C545.43,250.20 553.56,256.93 560.20,263.80 C566.76,270.59 572.57,278.86 576.50,287.20 C580.30,295.26 583.01,306.21 583.70,312.90 C584.13,317.06 583.50,319.69 583.00,323.20 C582.47,326.95 581.66,330.71 580.50,334.70 C579.19,339.23 577.46,344.39 575.30,348.90 C573.15,353.38 570.51,357.52 567.60,361.70 C564.54,366.09 561.18,370.45 557.30,374.60 C553.12,379.07 548.12,383.44 543.20,387.50 C538.26,391.58 534.43,394.73 527.70,399.00 C516.65,406.01 497.61,416.66 481.90,423.60 C466.37,430.46 441.34,445.83 434.00,440.50Z" fill="#fbb62c" stroke="#fbb62c" stroke-width="24.6" stroke-linejoin="miter"/>
<path d="M434.00,440.50 C433.79,426.71 495.70,406.73 520.00,390.00 C539.47,376.60 560.12,360.78 570.00,350.00 C575.24,344.28 575.28,338.41 580.00,335.00 C585.07,331.34 592.71,330.95 600.00,329.50 C608.52,327.81 619.44,325.68 628.10,326.00 C635.63,326.28 642.29,327.67 649.10,330.20 C656.35,332.89 663.86,337.29 670.20,342.10 C676.48,346.87 682.05,352.33 687.00,358.90 C692.46,366.15 698.09,376.57 701.00,384.20 C703.18,389.91 703.89,394.77 704.60,400.00 C705.29,405.03 705.37,410.00 705.30,415.00 C705.23,420.00 705.01,424.88 704.20,430.00 C703.32,435.53 702.18,441.01 700.00,447.00 C697.33,454.31 693.37,463.11 688.50,470.40 C683.45,477.95 676.99,486.26 670.00,491.40 C663.65,496.07 656.74,498.44 648.90,500.80 C639.84,503.53 629.02,505.62 618.50,505.90 C607.24,506.20 593.86,503.78 583.40,501.90 C574.76,500.34 568.80,498.52 560.00,496.10 C548.41,492.91 533.17,488.98 520.00,484.00 C506.49,478.89 493.67,472.56 480.00,465.70 C465.07,458.21 434.15,450.50 434.00,440.50Z" fill="#fbb62c" stroke="#fbb62c" stroke-width="24.6" stroke-linejoin="miter"/>
<path d="M434.00,440.50 C442.56,430.41 522.42,471.83 560.00,480.00 C589.36,486.38 619.54,487.99 640.00,490.00 C652.68,491.24 662.67,488.12 670.90,492.20 C678.51,495.97 684.38,504.50 688.40,512.10 C692.42,519.70 694.49,528.82 695.00,537.80 C695.55,547.46 694.13,558.58 690.80,568.20 C687.38,578.11 681.62,587.70 674.40,596.30 C666.41,605.81 655.21,616.14 644.00,622.00 C633.29,627.60 620.44,631.10 608.90,631.40 C597.82,631.68 586.31,628.36 576.10,624.40 C566.06,620.51 555.61,613.86 548.10,608.00 C542.10,603.32 539.71,600.04 533.60,593.20 C521.47,579.63 495.52,549.53 482.10,530.00 C471.66,514.81 465.51,501.88 457.60,487.20 C449.46,472.08 428.61,446.85 434.00,440.50Z" fill="#fbb62c" stroke="#fbb62c" stroke-width="24.6" stroke-linejoin="miter"/>
<path d="M434.00,440.50 C451.12,440.00 482.54,501.82 500.00,530.00 C514.21,552.93 528.51,576.56 533.60,595.50 C537.12,608.58 536.55,618.99 535.40,630.60 C534.23,642.39 531.99,655.49 526.50,665.70 C521.12,675.70 512.29,684.43 503.10,691.40 C493.67,698.55 481.61,704.38 470.40,707.80 C459.74,711.05 448.49,712.38 437.60,712.00 C426.66,711.62 415.01,709.67 404.90,705.50 C394.73,701.30 384.67,694.36 376.80,686.80 C369.15,679.45 362.40,670.22 358.10,661.00 C354.01,652.23 351.92,643.09 351.10,633.00 C350.16,621.48 351.89,607.22 354.20,595.50 C356.32,584.71 360.16,575.54 363.80,565.10 C367.75,553.76 371.16,542.20 377.20,530.00 C384.46,515.33 396.21,498.90 405.80,483.80 C415.15,469.08 422.33,440.84 434.00,440.50Z" fill="#fbb62c" stroke="#fbb62c" stroke-width="24.6" stroke-linejoin="miter"/>
<path d="M434.00,440.50 C441.92,454.12 392.80,510.50 380.00,540.00 C370.43,562.05 365.67,587.30 360.00,600.00 C357.19,606.29 356.49,609.05 352.30,613.50 C345.85,620.36 332.69,629.01 321.40,633.70 C309.87,638.50 296.26,641.70 283.70,641.70 C271.16,641.70 257.41,638.75 246.10,633.70 C235.06,628.77 224.94,620.90 216.50,612.10 C207.83,603.06 199.72,591.12 195.00,579.90 C190.64,569.54 188.20,558.37 188.20,547.60 C188.20,536.83 190.72,525.18 195.00,515.30 C199.27,505.45 206.09,496.47 213.80,488.40 C222.03,479.78 232.46,471.80 243.40,465.60 C254.77,459.15 268.06,454.53 281.00,450.80 C294.05,447.04 309.06,444.94 321.40,443.20 C331.72,441.75 340.12,441.12 350.00,440.50 C360.60,439.84 370.81,439.57 383.00,439.50 C398.16,439.42 428.68,431.36 434.00,440.50Z" fill="#fbb62c" stroke="#fbb62c" stroke-width="24.6" stroke-linejoin="miter"/>
</g><g id="drawlines" transform="translate(-141,-172)" fill="none">
<path d="M434.00,440.50 C437.62,432.77 414.67,412.14 405.00,398.50 C395.67,385.33 387.99,372.31 377.00,360.00 C364.98,346.54 349.29,332.18 335.00,321.50 C322.23,311.95 307.99,303.36 296.00,298.00 C286.73,293.86 278.67,291.75 270.00,290.00 C261.67,288.32 253.89,287.16 245.00,287.50 C234.74,287.90 222.42,289.70 212.00,293.40 C201.52,297.12 190.78,302.73 182.30,309.80 C173.91,316.80 166.05,325.80 161.30,335.50 C156.52,345.25 154.02,357.69 153.80,368.20 C153.59,377.90 155.57,387.45 159.00,396.30 C162.53,405.41 168.35,414.18 175.00,422.00 C182.03,430.27 190.44,437.55 200.50,444.30 C212.36,452.25 227.72,462.34 242.60,465.30 C257.55,468.28 274.02,463.67 290.00,462.00 C306.47,460.28 323.93,457.95 340.00,455.00 C355.20,452.21 368.78,447.40 384.00,445.00 C400.05,442.47 430.41,448.17 434.00,440.50Z" stroke="#cbcbcd" stroke-width="42.6"/>
<path d="M434.00,440.50 C426.41,443.72 411.93,430.45 400.00,420.00 C381.44,403.75 358.85,366.78 340.00,345.00 C324.56,327.17 305.20,314.15 296.00,298.00 C288.62,285.04 285.29,270.64 284.40,258.20 C283.64,247.53 285.98,236.68 288.70,228.00 C290.95,220.81 294.03,214.55 298.10,209.30 C301.93,204.36 307.24,200.46 312.10,197.10 C316.60,193.99 320.96,191.57 326.10,189.60 C331.76,187.43 338.52,185.93 344.80,185.00 C350.99,184.08 356.67,183.36 363.50,184.00 C372.04,184.81 382.85,186.79 391.90,191.00 C401.77,195.60 412.03,202.78 420.00,211.50 C428.64,220.95 435.89,234.46 441.00,246.50 C445.82,257.86 448.43,269.26 450.40,281.60 C452.52,294.89 452.76,310.19 452.70,323.70 C452.65,336.25 451.70,348.41 450.40,360.00 C449.19,370.77 447.65,379.50 445.40,391.00 C442.54,405.62 442.59,436.86 434.00,440.50Z" stroke="#cbcbcd" stroke-width="42.6"/>
<path d="M434.00,440.50 C427.45,435.74 434.26,415.33 435.00,400.00 C435.97,379.83 437.73,352.52 440.00,330.00 C442.13,308.88 441.65,281.06 448.00,268.80 C451.53,261.99 456.55,259.65 462.00,255.90 C468.06,251.72 475.54,247.97 483.10,245.40 C491.05,242.70 499.97,240.34 508.70,240.40 C517.85,240.46 528.25,242.43 536.80,246.30 C545.43,250.20 553.56,256.93 560.20,263.80 C566.76,270.59 572.57,278.86 576.50,287.20 C580.30,295.26 583.01,306.21 583.70,312.90 C584.13,317.06 583.50,319.69 583.00,323.20 C582.47,326.95 581.66,330.71 580.50,334.70 C579.19,339.23 577.46,344.39 575.30,348.90 C573.15,353.38 570.51,357.52 567.60,361.70 C564.54,366.09 561.18,370.45 557.30,374.60 C553.12,379.07 548.12,383.44 543.20,387.50 C538.26,391.58 534.43,394.73 527.70,399.00 C516.65,406.01 497.61,416.66 481.90,423.60 C466.37,430.46 441.34,445.83 434.00,440.50Z" stroke="#cbcbcd" stroke-width="42.6"/>
<path d="M434.00,440.50 C433.79,426.71 495.70,406.73 520.00,390.00 C539.47,376.60 560.12,360.78 570.00,350.00 C575.24,344.28 575.28,338.41 580.00,335.00 C585.07,331.34 592.71,330.95 600.00,329.50 C608.52,327.81 619.44,325.68 628.10,326.00 C635.63,326.28 642.29,327.67 649.10,330.20 C656.35,332.89 663.86,337.29 670.20,342.10 C676.48,346.87 682.05,352.33 687.00,358.90 C692.46,366.15 698.09,376.57 701.00,384.20 C703.18,389.91 703.89,394.77 704.60,400.00 C705.29,405.03 705.37,410.00 705.30,415.00 C705.23,420.00 705.01,424.88 704.20,430.00 C703.32,435.53 702.18,441.01 700.00,447.00 C697.33,454.31 693.37,463.11 688.50,470.40 C683.45,477.95 676.99,486.26 670.00,491.40 C663.65,496.07 656.74,498.44 648.90,500.80 C639.84,503.53 629.02,505.62 618.50,505.90 C607.24,506.20 593.86,503.78 583.40,501.90 C574.76,500.34 568.80,498.52 560.00,496.10 C548.41,492.91 533.17,488.98 520.00,484.00 C506.49,478.89 493.67,472.56 480.00,465.70 C465.07,458.21 434.15,450.50 434.00,440.50Z" stroke="#cbcbcd" stroke-width="42.6"/>
<path d="M434.00,440.50 C442.56,430.41 522.42,471.83 560.00,480.00 C589.36,486.38 619.54,487.99 640.00,490.00 C652.68,491.24 662.67,488.12 670.90,492.20 C678.51,495.97 684.38,504.50 688.40,512.10 C692.42,519.70 694.49,528.82 695.00,537.80 C695.55,547.46 694.13,558.58 690.80,568.20 C687.38,578.11 681.62,587.70 674.40,596.30 C666.41,605.81 655.21,616.14 644.00,622.00 C633.29,627.60 620.44,631.10 608.90,631.40 C597.82,631.68 586.31,628.36 576.10,624.40 C566.06,620.51 555.61,613.86 548.10,608.00 C542.10,603.32 539.71,600.04 533.60,593.20 C521.47,579.63 495.52,549.53 482.10,530.00 C471.66,514.81 465.51,501.88 457.60,487.20 C449.46,472.08 428.61,446.85 434.00,440.50Z" stroke="#cbcbcd" stroke-width="42.6"/>
<path d="M434.00,440.50 C451.12,440.00 482.54,501.82 500.00,530.00 C514.21,552.93 528.51,576.56 533.60,595.50 C537.12,608.58 536.55,618.99 535.40,630.60 C534.23,642.39 531.99,655.49 526.50,665.70 C521.12,675.70 512.29,684.43 503.10,691.40 C493.67,698.55 481.61,704.38 470.40,707.80 C459.74,711.05 448.49,712.38 437.60,712.00 C426.66,711.62 415.01,709.67 404.90,705.50 C394.73,701.30 384.67,694.36 376.80,686.80 C369.15,679.45 362.40,670.22 358.10,661.00 C354.01,652.23 351.92,643.09 351.10,633.00 C350.16,621.48 351.89,607.22 354.20,595.50 C356.32,584.71 360.16,575.54 363.80,565.10 C367.75,553.76 371.16,542.20 377.20,530.00 C384.46,515.33 396.21,498.90 405.80,483.80 C415.15,469.08 422.33,440.84 434.00,440.50Z" stroke="#cbcbcd" stroke-width="42.6"/>
<path d="M434.00,440.50 C441.92,454.12 392.80,510.50 380.00,540.00 C370.43,562.05 365.67,587.30 360.00,600.00 C357.19,606.29 356.49,609.05 352.30,613.50 C345.85,620.36 332.69,629.01 321.40,633.70 C309.87,638.50 296.26,641.70 283.70,641.70 C271.16,641.70 257.41,638.75 246.10,633.70 C235.06,628.77 224.94,620.90 216.50,612.10 C207.83,603.06 199.72,591.12 195.00,579.90 C190.64,569.54 188.20,558.37 188.20,547.60 C188.20,536.83 190.72,525.18 195.00,515.30 C199.27,505.45 206.09,496.47 213.80,488.40 C222.03,479.78 232.46,471.80 243.40,465.60 C254.77,459.15 268.06,454.53 281.00,450.80 C294.05,447.04 309.06,444.94 321.40,443.20 C331.72,441.75 340.12,441.12 350.00,440.50 C360.60,439.84 370.81,439.57 383.00,439.50 C398.16,439.42 428.68,431.36 434.00,440.50Z" stroke="#cbcbcd" stroke-width="42.6"/>
<path d="M434.00,440.50 C437.62,432.77 414.67,412.14 405.00,398.50 C395.67,385.33 387.99,372.31 377.00,360.00 C364.98,346.54 349.29,332.18 335.00,321.50 C322.23,311.95 307.99,303.36 296.00,298.00 C286.73,293.86 278.67,291.75 270.00,290.00 C261.67,288.32 253.89,287.16 245.00,287.50 C234.74,287.90 222.42,289.70 212.00,293.40 C201.52,297.12 190.78,302.73 182.30,309.80 C173.91,316.80 166.05,325.80 161.30,335.50 C156.52,345.25 154.02,357.69 153.80,368.20 C153.59,377.90 155.57,387.45 159.00,396.30 C162.53,405.41 168.35,414.18 175.00,422.00 C182.03,430.27 190.44,437.55 200.50,444.30 C212.36,452.25 227.72,462.34 242.60,465.30 C257.55,468.28 274.02,463.67 290.00,462.00 C306.47,460.28 323.93,457.95 340.00,455.00 C355.20,452.21 368.78,447.40 384.00,445.00 C400.05,442.47 430.41,448.17 434.00,440.50Z" stroke="#e2e2e4" stroke-width="24.6" fill="#e2e2e4"/>
<path d="M434.00,440.50 C426.41,443.72 411.93,430.45 400.00,420.00 C381.44,403.75 358.85,366.78 340.00,345.00 C324.56,327.17 305.20,314.15 296.00,298.00 C288.62,285.04 285.29,270.64 284.40,258.20 C283.64,247.53 285.98,236.68 288.70,228.00 C290.95,220.81 294.03,214.55 298.10,209.30 C301.93,204.36 307.24,200.46 312.10,197.10 C316.60,193.99 320.96,191.57 326.10,189.60 C331.76,187.43 338.52,185.93 344.80,185.00 C350.99,184.08 356.67,183.36 363.50,184.00 C372.04,184.81 382.85,186.79 391.90,191.00 C401.77,195.60 412.03,202.78 420.00,211.50 C428.64,220.95 435.89,234.46 441.00,246.50 C445.82,257.86 448.43,269.26 450.40,281.60 C452.52,294.89 452.76,310.19 452.70,323.70 C452.65,336.25 451.70,348.41 450.40,360.00 C449.19,370.77 447.65,379.50 445.40,391.00 C442.54,405.62 442.59,436.86 434.00,440.50Z" stroke="#e2e2e4" stroke-width="24.6" fill="#e2e2e4"/>
<path d="M434.00,440.50 C427.45,435.74 434.26,415.33 435.00,400.00 C435.97,379.83 437.73,352.52 440.00,330.00 C442.13,308.88 441.65,281.06 448.00,268.80 C451.53,261.99 456.55,259.65 462.00,255.90 C468.06,251.72 475.54,247.97 483.10,245.40 C491.05,242.70 499.97,240.34 508.70,240.40 C517.85,240.46 528.25,242.43 536.80,246.30 C545.43,250.20 553.56,256.93 560.20,263.80 C566.76,270.59 572.57,278.86 576.50,287.20 C580.30,295.26 583.01,306.21 583.70,312.90 C584.13,317.06 583.50,319.69 583.00,323.20 C582.47,326.95 581.66,330.71 580.50,334.70 C579.19,339.23 577.46,344.39 575.30,348.90 C573.15,353.38 570.51,357.52 567.60,361.70 C564.54,366.09 561.18,370.45 557.30,374.60 C553.12,379.07 548.12,383.44 543.20,387.50 C538.26,391.58 534.43,394.73 527.70,399.00 C516.65,406.01 497.61,416.66 481.90,423.60 C466.37,430.46 441.34,445.83 434.00,440.50Z" stroke="#e2e2e4" stroke-width="24.6" fill="#e2e2e4"/>
<path d="M434.00,440.50 C433.79,426.71 495.70,406.73 520.00,390.00 C539.47,376.60 560.12,360.78 570.00,350.00 C575.24,344.28 575.28,338.41 580.00,335.00 C585.07,331.34 592.71,330.95 600.00,329.50 C608.52,327.81 619.44,325.68 628.10,326.00 C635.63,326.28 642.29,327.67 649.10,330.20 C656.35,332.89 663.86,337.29 670.20,342.10 C676.48,346.87 682.05,352.33 687.00,358.90 C692.46,366.15 698.09,376.57 701.00,384.20 C703.18,389.91 703.89,394.77 704.60,400.00 C705.29,405.03 705.37,410.00 705.30,415.00 C705.23,420.00 705.01,424.88 704.20,430.00 C703.32,435.53 702.18,441.01 700.00,447.00 C697.33,454.31 693.37,463.11 688.50,470.40 C683.45,477.95 676.99,486.26 670.00,491.40 C663.65,496.07 656.74,498.44 648.90,500.80 C639.84,503.53 629.02,505.62 618.50,505.90 C607.24,506.20 593.86,503.78 583.40,501.90 C574.76,500.34 568.80,498.52 560.00,496.10 C548.41,492.91 533.17,488.98 520.00,484.00 C506.49,478.89 493.67,472.56 480.00,465.70 C465.07,458.21 434.15,450.50 434.00,440.50Z" stroke="#e2e2e4" stroke-width="24.6" fill="#e2e2e4"/>
<path d="M434.00,440.50 C442.56,430.41 522.42,471.83 560.00,480.00 C589.36,486.38 619.54,487.99 640.00,490.00 C652.68,491.24 662.67,488.12 670.90,492.20 C678.51,495.97 684.38,504.50 688.40,512.10 C692.42,519.70 694.49,528.82 695.00,537.80 C695.55,547.46 694.13,558.58 690.80,568.20 C687.38,578.11 681.62,587.70 674.40,596.30 C666.41,605.81 655.21,616.14 644.00,622.00 C633.29,627.60 620.44,631.10 608.90,631.40 C597.82,631.68 586.31,628.36 576.10,624.40 C566.06,620.51 555.61,613.86 548.10,608.00 C542.10,603.32 539.71,600.04 533.60,593.20 C521.47,579.63 495.52,549.53 482.10,530.00 C471.66,514.81 465.51,501.88 457.60,487.20 C449.46,472.08 428.61,446.85 434.00,440.50Z" stroke="#e2e2e4" stroke-width="24.6" fill="#e2e2e4"/>
<path d="M434.00,440.50 C451.12,440.00 482.54,501.82 500.00,530.00 C514.21,552.93 528.51,576.56 533.60,595.50 C537.12,608.58 536.55,618.99 535.40,630.60 C534.23,642.39 531.99,655.49 526.50,665.70 C521.12,675.70 512.29,684.43 503.10,691.40 C493.67,698.55 481.61,704.38 470.40,707.80 C459.74,711.05 448.49,712.38 437.60,712.00 C426.66,711.62 415.01,709.67 404.90,705.50 C394.73,701.30 384.67,694.36 376.80,686.80 C369.15,679.45 362.40,670.22 358.10,661.00 C354.01,652.23 351.92,643.09 351.10,633.00 C350.16,621.48 351.89,607.22 354.20,595.50 C356.32,584.71 360.16,575.54 363.80,565.10 C367.75,553.76 371.16,542.20 377.20,530.00 C384.46,515.33 396.21,498.90 405.80,483.80 C415.15,469.08 422.33,440.84 434.00,440.50Z" stroke="#e2e2e4" stroke-width="24.6" fill="#e2e2e4"/>
<path d="M434.00,440.50 C441.92,454.12 392.80,510.50 380.00,540.00 C370.43,562.05 365.67,587.30 360.00,600.00 C357.19,606.29 356.49,609.05 352.30,613.50 C345.85,620.36 332.69,629.01 321.40,633.70 C309.87,638.50 296.26,641.70 283.70,641.70 C271.16,641.70 257.41,638.75 246.10,633.70 C235.06,628.77 224.94,620.90 216.50,612.10 C207.83,603.06 199.72,591.12 195.00,579.90 C190.64,569.54 188.20,558.37 188.20,547.60 C188.20,536.83 190.72,525.18 195.00,515.30 C199.27,505.45 206.09,496.47 213.80,488.40 C222.03,479.78 232.46,471.80 243.40,465.60 C254.77,459.15 268.06,454.53 281.00,450.80 C294.05,447.04 309.06,444.94 321.40,443.20 C331.72,441.75 340.12,441.12 350.00,440.50 C360.60,439.84 370.81,439.57 383.00,439.50 C398.16,439.42 428.68,431.36 434.00,440.50Z" stroke="#e2e2e4" stroke-width="24.6" fill="#e2e2e4"/>
<path d="M434.00,440.50 C441.92,454.12 392.80,510.50 380.00,540.00 C370.43,562.05 365.67,587.30 360.00,600.00 C357.19,606.29 356.49,609.05 352.30,613.50 C345.85,620.36 332.69,629.01 321.40,633.70 C309.87,638.50 296.26,641.70 283.70,641.70 C271.16,641.70 257.41,638.75 246.10,633.70 C235.06,628.77 224.94,620.90 216.50,612.10 C207.83,603.06 199.72,591.12 195.00,579.90 C190.64,569.54 188.20,558.37 188.20,547.60 C188.20,536.83 190.72,525.18 195.00,515.30 C199.27,505.45 206.09,496.47 213.80,488.40 C222.03,479.78 232.46,471.80 243.40,465.60 C254.77,459.15 268.06,454.53 281.00,450.80 C294.05,447.04 309.06,444.94 321.40,443.20 C331.72,441.75 340.12,441.12 350.00,440.50 C360.60,439.84 370.81,439.57 383.00,439.50 C398.16,439.42 428.68,431.36 434.00,440.50Z" stroke="#cbcbcd" stroke-width="9" fill="#e2e2e4"/><path d="M434.00,440.50 C435.67,443.02 408.31,463.00 396.80,476.00 C384.91,489.43 372.49,508.83 364.00,520.00 C358.72,526.95 356.67,531.14 351.00,536.80 C343.48,544.32 330.95,555.06 321.40,559.70 C314.05,563.27 306.84,565.76 299.90,565.10 C292.94,564.44 284.19,560.63 279.70,555.70 C275.44,551.02 272.95,543.29 273.00,536.80 C273.05,529.85 276.26,522.30 281.00,515.30 C287.26,506.05 299.56,495.95 310.60,488.40 C321.93,480.65 335.41,474.19 348.30,469.60 C360.73,465.17 373.28,465.30 386.50,461.00 C401.69,456.06 432.32,437.97 434.00,440.50Z" stroke="#cbcbcd" stroke-width="9"/>
<path d="M434.00,440.50 C451.12,440.00 482.54,501.82 500.00,530.00 C514.21,552.93 528.51,576.56 533.60,595.50 C537.12,608.58 536.55,618.99 535.40,630.60 C534.23,642.39 531.99,655.49 526.50,665.70 C521.12,675.70 512.29,684.43 503.10,691.40 C493.67,698.55 481.61,704.38 470.40,707.80 C459.74,711.05 448.49,712.38 437.60,712.00 C426.66,711.62 415.01,709.67 404.90,705.50 C394.73,701.30 384.67,694.36 376.80,686.80 C369.15,679.45 362.40,670.22 358.10,661.00 C354.01,652.23 351.92,643.09 351.10,633.00 C350.16,621.48 351.89,607.22 354.20,595.50 C356.32,584.71 360.16,575.54 363.80,565.10 C367.75,553.76 371.16,542.20 377.20,530.00 C384.46,515.33 396.21,498.90 405.80,483.80 C415.15,469.08 422.33,440.84 434.00,440.50Z" stroke="#cbcbcd" stroke-width="9" fill="#e2e2e4"/><path d="M434.00,440.50 C436.80,440.49 438.63,476.66 442.60,491.00 C445.70,502.18 450.19,508.93 453.90,520.00 C458.69,534.27 465.07,555.14 468.00,569.80 C470.25,581.08 472.42,590.35 471.60,600.20 C470.80,609.83 468.76,622.41 463.40,628.30 C458.95,633.20 451.06,635.68 444.60,635.80 C437.82,635.92 429.33,632.78 423.60,628.30 C417.49,623.52 412.74,615.67 409.60,607.20 C405.77,596.87 404.59,582.44 404.90,569.80 C405.22,556.72 408.45,543.06 411.90,530.00 C415.39,516.78 422.20,505.01 425.80,491.00 C429.81,475.42 431.20,440.51 434.00,440.50Z" stroke="#cbcbcd" stroke-width="9"/>
<path d="M434.00,440.50 C442.56,430.41 522.42,471.83 560.00,480.00 C589.36,486.38 619.54,487.99 640.00,490.00 C652.68,491.24 662.67,488.12 670.90,492.20 C678.51,495.97 684.38,504.50 688.40,512.10 C692.42,519.70 694.49,528.82 695.00,537.80 C695.55,547.46 694.13,558.58 690.80,568.20 C687.38,578.11 681.62,587.70 674.40,596.30 C666.41,605.81 655.21,616.14 644.00,622.00 C633.29,627.60 620.44,631.10 608.90,631.40 C597.82,631.68 586.31,628.36 576.10,624.40 C566.06,620.51 555.61,613.86 548.10,608.00 C542.10,603.32 539.71,600.04 533.60,593.20 C521.47,579.63 495.52,549.53 482.10,530.00 C471.66,514.81 465.51,501.88 457.60,487.20 C449.46,472.08 428.61,446.85 434.00,440.50Z" stroke="#cbcbcd" stroke-width="9" fill="#e2e2e4"/><path d="M434.00,440.50 C435.08,439.25 462.52,463.21 476.30,470.40 C487.76,476.38 498.79,478.56 510.00,482.60 C521.16,486.62 532.70,489.84 543.40,494.60 C553.95,499.29 564.86,504.86 573.80,510.90 C581.78,516.29 590.43,522.07 594.90,528.50 C598.46,533.61 601.11,539.62 600.70,544.90 C600.29,550.16 596.78,556.79 592.50,560.10 C587.99,563.59 580.49,564.93 573.80,564.70 C565.88,564.43 556.61,560.43 548.10,556.50 C538.67,552.14 528.33,545.40 520.00,539.00 C512.36,533.14 506.70,528.01 499.70,520.00 C490.16,509.08 480.74,491.14 469.80,477.90 C458.84,464.64 432.92,441.75 434.00,440.50Z" stroke="#cbcbcd" stroke-width="9"/>
<path d="M434.00,440.50 C433.79,426.71 495.70,406.73 520.00,390.00 C539.47,376.60 560.12,360.78 570.00,350.00 C575.24,344.28 575.28,338.41 580.00,335.00 C585.07,331.34 592.71,330.95 600.00,329.50 C608.52,327.81 619.44,325.68 628.10,326.00 C635.63,326.28 642.29,327.67 649.10,330.20 C656.35,332.89 663.86,337.29 670.20,342.10 C676.48,346.87 682.05,352.33 687.00,358.90 C692.46,366.15 698.09,376.57 701.00,384.20 C703.18,389.91 703.89,394.77 704.60,400.00 C705.29,405.03 705.37,410.00 705.30,415.00 C705.23,420.00 705.01,424.88 704.20,430.00 C703.32,435.53 702.18,441.01 700.00,447.00 C697.33,454.31 693.37,463.11 688.50,470.40 C683.45,477.95 676.99,486.26 670.00,491.40 C663.65,496.07 656.74,498.44 648.90,500.80 C639.84,503.53 629.02,505.62 618.50,505.90 C607.24,506.20 593.86,503.78 583.40,501.90 C574.76,500.34 568.80,498.52 560.00,496.10 C548.41,492.91 533.17,488.98 520.00,484.00 C506.49,478.89 493.67,472.56 480.00,465.70 C465.07,458.21 434.15,450.50 434.00,440.50Z" stroke="#cbcbcd" stroke-width="9" fill="#e2e2e4"/><path d="M434.00,440.50 C433.88,436.99 468.33,434.13 483.20,428.30 C496.74,422.99 508.72,413.62 520.00,408.00 C529.23,403.40 537.31,400.00 545.70,396.50 C553.59,393.21 561.46,389.73 568.90,387.50 C575.49,385.53 581.48,383.32 588.00,383.40 C594.87,383.49 603.64,385.24 609.10,388.50 C613.74,391.27 617.46,395.78 619.60,400.20 C621.63,404.40 622.26,409.38 622.00,414.20 C621.71,419.48 620.24,425.63 617.30,430.60 C614.06,436.07 608.38,441.21 602.60,445.20 C596.41,449.47 588.28,452.58 581.00,455.00 C574.07,457.30 567.28,458.78 560.00,459.60 C552.31,460.46 544.14,460.33 536.00,459.80 C527.49,459.25 518.55,457.93 510.00,456.20 C501.45,454.47 494.64,451.60 484.70,449.40 C470.76,446.31 434.12,444.03 434.00,440.50Z" stroke="#cbcbcd" stroke-width="9"/>
<path d="M434.00,440.50 C427.45,435.74 434.26,415.33 435.00,400.00 C435.97,379.83 437.73,352.52 440.00,330.00 C442.13,308.88 441.65,281.06 448.00,268.80 C451.53,261.99 456.55,259.65 462.00,255.90 C468.06,251.72 475.54,247.97 483.10,245.40 C491.05,242.70 499.97,240.34 508.70,240.40 C517.85,240.46 528.25,242.43 536.80,246.30 C545.43,250.20 553.56,256.93 560.20,263.80 C566.76,270.59 572.57,278.86 576.50,287.20 C580.30,295.26 583.01,306.21 583.70,312.90 C584.13,317.06 583.50,319.69 583.00,323.20 C582.47,326.95 581.66,330.71 580.50,334.70 C579.19,339.23 577.46,344.39 575.30,348.90 C573.15,353.38 570.51,357.52 567.60,361.70 C564.54,366.09 561.18,370.45 557.30,374.60 C553.12,379.07 548.12,383.44 543.20,387.50 C538.26,391.58 534.43,394.73 527.70,399.00 C516.65,406.01 497.61,416.66 481.90,423.60 C466.37,430.46 441.34,445.83 434.00,440.50Z" stroke="#cbcbcd" stroke-width="9" fill="#e2e2e4"/><path d="M434.00,440.50 C430.86,438.19 449.11,408.21 453.90,393.70 C457.86,381.72 458.29,371.64 462.00,360.00 C466.18,346.86 471.68,331.03 478.40,319.00 C484.40,308.26 492.16,294.74 499.40,290.70 C503.97,288.15 508.93,288.34 513.40,289.50 C518.30,290.77 523.77,294.56 527.40,298.90 C531.39,303.67 534.70,310.88 535.60,317.60 C536.56,324.83 534.61,333.05 532.10,341.00 C529.21,350.14 524.58,360.40 518.10,369.00 C510.94,378.49 498.41,387.85 490.00,394.80 C483.66,400.04 479.43,402.27 472.60,407.70 C462.15,416.00 437.13,442.80 434.00,440.50Z" stroke="#cbcbcd" stroke-width="9"/>
<path d="M434.00,440.50 C426.41,443.72 411.93,430.45 400.00,420.00 C381.44,403.75 358.85,366.78 340.00,345.00 C324.56,327.17 305.20,314.15 296.00,298.00 C288.62,285.04 285.29,270.64 284.40,258.20 C283.64,247.53 285.98,236.68 288.70,228.00 C290.95,220.81 294.03,214.55 298.10,209.30 C301.93,204.36 307.24,200.46 312.10,197.10 C316.60,193.99 320.96,191.57 326.10,189.60 C331.76,187.43 338.52,185.93 344.80,185.00 C350.99,184.08 356.67,183.36 363.50,184.00 C372.04,184.81 382.85,186.79 391.90,191.00 C401.77,195.60 412.03,202.78 420.00,211.50 C428.64,220.95 435.89,234.46 441.00,246.50 C445.82,257.86 448.43,269.26 450.40,281.60 C452.52,294.89 452.76,310.19 452.70,323.70 C452.65,336.25 451.70,348.41 450.40,360.00 C449.19,370.77 447.65,379.50 445.40,391.00 C442.54,405.62 442.59,436.86 434.00,440.50Z" stroke="#cbcbcd" stroke-width="9" fill="#e2e2e4"/><path d="M434.00,440.50 C431.68,440.95 425.73,405.74 417.40,392.00 C409.67,379.25 396.62,372.08 387.00,360.00 C376.29,346.55 365.96,329.47 356.80,314.40 C348.20,300.25 336.94,284.65 333.40,272.30 C330.93,263.68 330.03,255.74 332.20,248.90 C334.29,242.31 339.77,235.19 345.60,231.80 C351.46,228.40 360.20,228.03 367.30,228.60 C374.40,229.17 381.87,231.30 388.20,235.20 C395.18,239.50 401.37,246.90 406.80,254.30 C412.72,262.37 417.94,271.67 421.80,282.20 C426.26,294.39 428.78,310.26 430.60,323.70 C432.29,336.14 432.72,348.47 432.80,360.00 C432.87,370.47 431.37,378.71 431.40,390.00 C431.44,404.65 436.30,440.06 434.00,440.50Z" stroke="#cbcbcd" stroke-width="9"/>
<path d="M434.00,440.50 C437.62,432.77 414.67,412.14 405.00,398.50 C395.67,385.33 387.99,372.31 377.00,360.00 C364.98,346.54 349.29,332.18 335.00,321.50 C322.23,311.95 307.99,303.36 296.00,298.00 C286.73,293.86 278.67,291.75 270.00,290.00 C261.67,288.32 253.89,287.16 245.00,287.50 C234.74,287.90 222.42,289.70 212.00,293.40 C201.52,297.12 190.78,302.73 182.30,309.80 C173.91,316.80 166.05,325.80 161.30,335.50 C156.52,345.25 154.02,357.69 153.80,368.20 C153.59,377.90 155.57,387.45 159.00,396.30 C162.53,405.41 168.35,414.18 175.00,422.00 C182.03,430.27 190.44,437.55 200.50,444.30 C212.36,452.25 227.72,462.34 242.60,465.30 C257.55,468.28 274.02,463.67 290.00,462.00 C306.47,460.28 323.93,457.95 340.00,455.00 C355.20,452.21 368.78,447.40 384.00,445.00 C400.05,442.47 430.41,448.17 434.00,440.50Z" stroke="#cbcbcd" stroke-width="9" fill="#e2e2e4"/><path d="M434.00,440.50 C435.32,437.80 404.21,420.76 392.00,410.00 C381.07,400.37 372.42,388.59 363.50,379.70 C356.07,372.29 350.94,366.29 342.40,360.00 C331.75,352.16 316.22,342.43 303.40,337.80 C292.37,333.82 280.93,331.77 270.70,332.00 C261.57,332.21 252.06,333.84 244.90,337.80 C238.21,341.50 231.41,347.97 228.60,354.20 C226.07,359.81 225.75,366.94 227.40,372.90 C229.22,379.46 234.25,386.17 240.30,391.60 C247.77,398.29 260.14,403.69 270.70,408.00 C281.18,412.28 292.51,415.05 303.40,417.40 C313.95,419.67 323.26,420.63 335.00,422.00 C349.66,423.72 368.23,423.37 384.60,426.40 C401.23,429.48 432.69,443.19 434.00,440.50Z" stroke="#cbcbcd" stroke-width="9"/>
<circle cx="434" cy="440.5" r="50.5" fill="#e2e2e4" stroke="#cbcbcd" stroke-width="11"/>
</g></defs>
<rect x="141" y="171.9" width="577.1" height="553.1" fill="none" stroke="#86a5cd" stroke-width="1.85"/>
<circle cx="125.9" cy="156.8" r="14.9" fill="#d9455c"/>
<path d="M121.4,152.2L131.2,162M131.2,152.2L121.4,162" stroke="#fff" stroke-width="3.2"/>
<circle cx="732.9" cy="157" r="13.1" fill="#8fb0d8" fill-opacity="0.9"/>
<path d="M726.6,157.2A6.4,6.4 0 1 0 731.4,151" fill="none" stroke="#fff" stroke-width="2.4"/>
<path d="M727.4,151.6L731.8,147.6L732.2,155.4Z" fill="#fff"/>
<circle cx="125.9" cy="739.6" r="13.1" fill="#8fb0d8" fill-opacity="0.9"/>
<rect x="120.3" y="738.6" width="11.2" height="7.6" fill="#fff"/>
<path d="M122.4,739V735.6A3.5,3.5 0 0 1 129.4,735.6V739" fill="none" stroke="#fff" stroke-width="2"/>
<circle cx="733" cy="740" r="14.9" fill="#8fb0d8" fill-opacity="0.9"/>
<path d="M727.6,734.6L732.6,735.2L728.2,739.6Z M738.4,745.4L733.4,744.8L737.8,740.4Z" fill="#fff" stroke="#fff" stroke-width="0.5" stroke-linejoin="round"/>
<path d="M729.5,736.5L732.2,739.2M733.8,740.8L736.5,743.5" stroke="#fff" stroke-width="1.8"/>
<rect x="741.8" y="435.8" width="50" height="17.4" fill="#fff"/><text x="747" y="448.9" font-size="12.3" fill="#505458">10.237"</text>
<rect x="403.5" y="746.5" width="52" height="16.7" fill="#fff"/><text x="409.4" y="758.9" font-size="12.3" fill="#505458">10.688"</text>
<rect x="97" y="792" width="86" height="38" rx="5" fill="#f3f4f6" fill-opacity="0.85"/>
<circle cx="112" cy="812" r="9.5" fill="none" stroke="#bfc1c4" stroke-width="1"/>
<path d="M107.5,812H116.5" stroke="#bfc1c4" stroke-width="1"/>
<circle cx="168.5" cy="812" r="9.5" fill="none" stroke="#bfc1c4" stroke-width="1"/>
<path d="M164,812H173M168.5,807.5V816.5" stroke="#bfc1c4" stroke-width="1"/>
<text x="128" y="818" font-size="11.5" fill="#bdbfc2">75%</text>
<rect x="87.5" y="839" width="928.5" height="16" fill="#f7f8f9" fill-opacity="0.75"/><rect x="87.5" y="839" width="928.5" height="1" fill="#dcdcdc"/>
<rect x="88.5" y="842" width="199.5" height="11" rx="5.5" fill="#7b7b7b"/>
</svg>
<div id="hdr" class="abs"></div>
<div id="side" class="abs"></div>
<div id="tb" class="abs"></div>
<div id="rp" class="abs">
  <div class="abs" style="left:0;top:0;width:258px;height:185px;background:#e2e2e4"></div>
  <div class="abs" style="left:0;top:20.6px;width:130px;height:1.7px;background:#4b545c"></div>
  <div class="abs" style="left:130px;top:21.5px;width:128px;height:1px;background:#cfcfd1"></div>
  <div class="abs" style="left:0;top:67px;width:258px;height:1px;background:#c9c9cb"></div>
  <div class="abs" style="left:29px;top:99px;width:229px;height:1px;background:#b9b9bb"></div>
  <div class="abs" style="left:29px;top:139px;width:229px;height:1px;background:#b9b9bb"></div>
  <div class="abs" style="left:0;top:185px;width:258px;height:1px;background:#c9c9cb"></div>
  <div class="abs" style="left:0;top:710px;width:258px;height:1px;background:#c4c4c6"></div>
  <div class="abs" style="left:0;top:759px;width:258px;height:46px;background:#e2e2e4"></div>
  <div class="abs" style="left:0;top:804px;width:258px;height:1px;background:#b4b4b6"></div>
  <div class="abs" style="left:10px;top:716px;width:53px;height:36px;background:#fff;border:1px solid #66686b;border-radius:2.5px"></div>
</div>
<svg class="abs" style="left:0;top:0" width="1290" height="855" viewBox="0 0 1290 855" font-family="Liberation Sans, sans-serif">
<!-- header -->
<g fill="#fff">
<rect x="22.3" y="19" width="23.3" height="1.8"/><rect x="22.3" y="25" width="23.3" height="1.8"/><rect x="22.3" y="31.1" width="23.3" height="1.8"/>
<text x="68.8" y="31" font-size="16" letter-spacing="-0.5">Canvas</text>
<text x="547.8" y="31" font-size="16" letter-spacing="-0.48">Untitled*</text>
<text x="1041.9" y="28.8" font-size="12.3" stroke="#fff" stroke-width="0.45">My Projects</text>
<text x="1126.9" y="28.8" font-size="12.3" stroke="#fff" stroke-width="0.45" letter-spacing="-0.3">Save</text>
</g>
<rect x="1169" y="14" width="113" height="22.8" rx="2.5" fill="#6fb52c"/>
<text x="1202.6" y="29.7" font-size="12.6" fill="#fff">Make It</text>
<!-- sidebar -->
<g fill="none" stroke="#4b545c" stroke-width="1.2">
<circle cx="32.5" cy="80.5" r="12.2"/>
</g>
<path d="M27.5,80.8H37.7M32.6,75.8V85.8" stroke="#4b545c" stroke-width="1.8" fill="none"/>
<g font-size="10" fill="#3c4148" text-anchor="middle">
<text x="34.3" y="107.9">New</text>
<text x="33.9" y="178.5">Templates</text>
<text x="34" y="248.2">Projects</text>
<text x="33.8" y="318.4">Images</text>
<text x="33.5" y="388.2">Text</text>
<text x="33.7" y="458.1">Shapes</text>
<text x="34" y="528.1">Upload</text>
</g>
<g fill="none" stroke="#4b545c" stroke-width="1.2" stroke-linejoin="round">
<!-- tshirt -->
<path d="M27.2,138.5C29.2,139.3 31.2,141.6 33.2,141.6C35.2,141.6 36.4,139.3 38.3,138.5L46.3,142.2C46.7,142.4 46.8,142.9 46.7,143.3L44.2,147.9C44,148.3 43.5,148.4 43.1,148.2L40.8,147.3L39.9,161.2C39.8,161.8 39.4,162.2 38.8,162.2H26.9C26.3,162.2 25.9,161.8 25.8,161.2L25,147.3L22.7,148.2C22.3,148.4 21.8,148.3 21.6,147.9L19.1,143.3C19,142.9 19.1,142.4 19.5,142.2Z" stroke-width="1.15"/>
<!-- projects -->
<rect x="24.8" y="208.6" width="18.8" height="23.2" stroke-width="1.3"/>
<path d="M34.6,208.6V219.6L38,216.4L41.2,219.6V208.6"/>
<path d="M41.8,209V231" stroke-width="0.8"/>
<path d="M21.6,213.2H28.4M21.6,219.3H28.4M21.6,225.4H28.4" stroke-width="1.3"/>
<!-- images -->
<rect x="18.6" y="278.5" width="28" height="24" stroke-width="1.3"/>
<circle cx="25.8" cy="287" r="2.9"/>
<path d="M24.8,302.3L32.4,292.4L36.5,295.5L40.7,288.6L46.4,296.3"/>
<!-- text T -->
<path d="M21.2,348.2H43.6V355.6C42.8,354 41.6,352.3 39.8,352.3H35.6V369.7C35.6,370.4 36.2,370.9 37,370.9H39V373.2H26V370.9H28C28.8,370.9 29.4,370.4 29.4,369.7V352.3H25C23.2,352.3 22,354 21.2,355.6Z"/>
<!-- shapes -->
<path d="M24.9,432.1A8,8 0 1 1 39,426.3" />
<path d="M29.7,424.3L34.9,428.3L40.7,426.5L38.5,432.3L42.6,436.9L36.1,437.3L32.9,442.4L30.9,436.5L25.3,434.3L29.7,430.9Z"/>
<!-- upload cloud -->
<path d="M24.2,509.6 C21.6,509.6 20,507.3 20,504.8 C20,502 22.2,500 24.6,499.9 C24.8,495.2 28,491.9 32.2,491.9 C35.4,491.9 38,493.9 39,496.6 C42.4,496.4 45,499.4 45,503.2 C45,506.8 42.7,509.6 39.6,509.6 Z"/>
<path d="M29.4,506.2V501.6H26.8L31.8,496.3L36.8,501.6H34.2V506.2Z" stroke-width="1.1"/>
</g>
<!-- toolbar -->
<rect x="148" y="58" width="1" height="34" fill="#e2e2e4"/>
<rect x="358" y="58" width="1" height="34" fill="#e2e2e4"/>
<rect x="467" y="58" width="1" height="34" fill="#e2e2e4"/>
<rect x="612" y="58" width="1" height="34" fill="#e2e2e4"/>
<rect x="798" y="58" width="1" height="34" fill="#e2e2e4"/>
<rect x="904.5" y="58" width="1" height="34" fill="#e2e2e4"/>
<g fill="none" stroke-linejoin="round" stroke-linecap="round">
<path d="M84.6,73.2L89.8,67.3V70.4C96.5,70.8 101.2,74.6 101.8,80.9C99.2,77.6 95.5,76.4 89.8,76.4V79.2Z" stroke="#4b545c" stroke-width="1.2"/>
<path d="M133.4,73.2L128.2,67.3V70.4C121.5,70.8 116.8,74.6 116.2,80.9C118.8,77.6 122.5,76.4 128.2,76.4V79.2Z" stroke="#d2d4d6" stroke-width="1.2"/>
</g>
<g font-size="10" fill="#3c4148">
<text x="164.3" y="67.3">Linetype</text>
<text x="374.6" y="67.2">Deselect</text>
<text x="431.6" y="67.2">Edit</text>
<text x="577.3" y="67.2">Flip</text>
<text x="627.8" y="67.2">Size</text>
<text x="813.8" y="67.2">Rotate</text>
<text x="912.5" y="78.2">More</text>
<text x="627.8" y="85.9" font-size="10.5">W</text>
<text x="714.3" y="85.9" font-size="10.5">H</text>
</g>
<g font-size="10" fill="#c5c7ca">
<text x="261.5" y="67.2">Fill</text>
<text x="484.5" y="67.2">Align</text>
<text x="523.3" y="67.2">Arrange</text>
</g>
<!-- linetype select -->
<rect x="164.5" y="73.5" width="59" height="17" rx="2.5" fill="#fff" stroke="#d6d7d9" stroke-width="1"/>
<text x="170.6" y="86.4" font-size="10.6" fill="#3c4148">Multiple</text>
<path d="M211.7,80.2H218L214.85,85Z" fill="#3c4148"/>
<rect x="228.5" y="72.5" width="18.8" height="18.8" rx="3" fill="#fff" stroke="#cfd0d2" stroke-width="1" stroke-dasharray="1.5,1.5"/>
<text x="235.5" y="86.4" font-size="10.5" fill="#3c4148">?</text>
<rect x="261.8" y="73.8" width="58.3" height="16.2" rx="2.5" fill="#fff" stroke="#ededee" stroke-width="1"/>
<text x="267.7" y="86.4" font-size="10.6" fill="#cfd1d3">No Fill</text>
<path d="M309.5,80.5H315.2L312.35,85Z" fill="#d6d7d9"/>
<rect x="326.8" y="73.8" width="16.9" height="16.2" rx="2" fill="#fff" stroke="#ededee" stroke-width="1"/>
<path d="M328.2,88.6L342.4,75" stroke="#e8aab3" stroke-width="2.6" stroke-linecap="round"/>
<!-- deselect icon -->
<rect x="384.8" y="73.6" width="17.8" height="17.2" fill="none" stroke="#4b545c" stroke-width="1.3" stroke-dasharray="1.6,1.6"/>
<path d="M388.4,82.3H398.4M393.4,77.3V87.3" stroke="#4b545c" stroke-width="1.3"/>
<!-- edit icon -->
<g fill="none" stroke="#4b545c" stroke-width="1.15" stroke-linejoin="round">
<g transform="rotate(45 435.9 81.9)"><rect x="427.8" y="79" width="16.2" height="5.8" rx="0.8" fill="#fff"/><path d="M430.3,79V81.2M432.6,79V80.6M434.9,79V81.2M437.2,79V80.6M439.5,79V81.2M441.8,79V80.6" stroke-width="0.9"/></g>
<g transform="rotate(-45 435.9 81.9)"><path d="M426.8,79.7H443.6V84.1H426.8L423.2,81.9Z" fill="#fff"/><path d="M429,79.7V84.1M429,81.9H443.6" stroke-width="0.8"/></g>
</g>
<path d="M447.1,81.2H452.8L449.95,85.4Z" fill="#4b545c"/>
<!-- align icon -->
<path d="M485.5,73.8V90" stroke="#d0d2d4" stroke-width="1" stroke-dasharray="1.2,1.2"/>
<rect x="487.8" y="78.6" width="11.3" height="1.8" fill="none" stroke="#d0d2d4" stroke-width="0.9"/>
<rect x="487.8" y="83.4" width="7.5" height="1.8" fill="none" stroke="#d0d2d4" stroke-width="0.9"/>
<path d="M503.3,81.2H509L506.15,86Z" fill="#d6d7d9"/>
<!-- arrange icon -->
<rect x="528" y="74" width="13.3" height="12.5" fill="none" stroke="#d0d2d4" stroke-width="1" stroke-dasharray="1.2,1.2"/>
<rect x="531" y="76.8" width="11" height="10.5" fill="#fff" stroke="#d0d2d4" stroke-width="1"/>
<rect x="534.4" y="79.6" width="10.4" height="10.4" fill="#fff" stroke="#d0d2d4" stroke-width="1"/>
<path d="M547.2,81.2H552.9L550.05,86Z" fill="#d6d7d9"/>
<!-- flip icon -->
<path d="M572.6,76.4V88.2L578.8,82.3Z M589.3,76.4V88.2L583.1,82.3Z" fill="none" stroke="#4b545c" stroke-width="1.2" stroke-linejoin="round"/>
<path d="M580.95,73.4V91" stroke="#4b545c" stroke-width="1.2" stroke-dasharray="1.5,1.3"/>
<path d="M592.8,81H598.2L595.5,85.8Z" fill="#3c4148"/>
<!-- W input -->
<rect x="642.6" y="73.8" width="55.6" height="16.6" rx="3" fill="#fff" stroke="#d6d7d9" stroke-width="1"/>
<path d="M685.6,73.8V90.4" stroke="#e4e4e6" stroke-width="1"/>
<text x="648.5" y="86.2" font-size="11.3" fill="#3c4148">10.688</text>
<path d="M688.5,81H695.5L692,75.9Z M688.5,83.2H695.5L692,88.3Z" fill="#3c4148"/>
<!-- lock -->
<path d="M701.5,71.6V68.8H706.5M723,68.8H728V71.6" fill="none" stroke="#9a9ea3" stroke-width="0.9"/>
<rect x="709.6" y="66.6" width="10.3" height="7" rx="1.6" fill="none" stroke="#4b545c" stroke-width="1.2"/>
<path d="M711.6,66.6V64.8A3.15,3.15 0 0 1 717.9,64.8V66.6" fill="none" stroke="#4b545c" stroke-width="1.2"/>
<circle cx="714.75" cy="70.1" r="1.1" fill="#4b545c"/>
<!-- H input -->
<rect x="727.5" y="73.8" width="55.8" height="16.6" rx="3" fill="#fff" stroke="#d6d7d9" stroke-width="1"/>
<path d="M770.4,73.8V90.4" stroke="#e4e4e6" stroke-width="1"/>
<text x="732.9" y="86.2" font-size="11.3" fill="#3c4148">10.237</text>
<path d="M773.8,81H780.8L777.3,75.9Z M773.8,83.2H780.8L777.3,88.3Z" fill="#3c4148"/>
<!-- rotate -->
<path d="M825.4,85.4A6.3,6.3 0 1 1 826.4,78.6" fill="none" stroke="#4b545c" stroke-width="1.3"/>
<path d="M823.6,79.8L828.2,81.6L828.8,76.6Z" fill="#4b545c"/>
<rect x="833.8" y="75.5" width="55.5" height="17" rx="3" fill="#fff" stroke="#d6d7d9" stroke-width="1"/>
<path d="M876.5,75.5V92.5" stroke="#e4e4e6" stroke-width="1"/>
<text x="839" y="88.4" font-size="11.3" fill="#3c4148">0</text>
<path d="M879.6,82.6H886.4L883,77.6Z M879.6,84.8H886.4L883,89.8Z" fill="#3c4148"/>
<path d="M940,73.2H948L944,77.6Z" fill="#3c4148"/>
<!-- right panel -->
<g font-size="11.8" fill="#3c4148">
<text x="1079.5" y="63.6">Layers</text>
<text x="1213.5" y="63.6">Sync</text>
</g>
<g fill="none" stroke="#bcbec1" stroke-width="1">
<rect x="1052.5" y="79.6" width="17" height="14.4"/>
<rect x="1055.4" y="82.8" width="7.2" height="5.9"/>
<path d="M1062.6,84.8H1066.4V91.2H1059.2V88.7"/>
<rect x="1117.8" y="79.6" width="9.8" height="9.2"/>
<rect x="1121.6" y="83.4" width="11.6" height="10.6" stroke-dasharray="1.3,1"/>
</g>
<g fill="#e2e2e4" stroke="#bcbec1" stroke-width="0.9">
<circle cx="1052.5" cy="79.6" r="1.3"/><circle cx="1069.5" cy="79.6" r="1.3"/><circle cx="1052.5" cy="94" r="1.3"/><circle cx="1069.5" cy="94" r="1.3"/>
<circle cx="1117.8" cy="79.6" r="1.2"/><circle cx="1127.6" cy="79.6" r="1.2"/><circle cx="1117.8" cy="88.8" r="1.2"/>
<circle cx="1121.6" cy="83.4" r="1.2"/><circle cx="1133.2" cy="83.4" r="1.2"/><circle cx="1121.6" cy="94" r="1.2"/><circle cx="1133.2" cy="94" r="1.2"/>
</g>
<g fill="none" stroke="#3c4148" stroke-width="1.1" stroke-linejoin="round">
<rect x="1189.4" y="78.4" width="11.2" height="14.4" rx="1"/>
<rect x="1193.2" y="80.8" width="11.6" height="14" rx="1" fill="#e2e2e4"/>
<path d="M1199,82.6L1200.3,85.5L1203.4,85.8L1201,87.8L1201.8,90.9L1199,89.3L1196.2,90.9L1197,87.8L1194.6,85.8L1197.7,85.5Z" stroke-width="0.9"/>
<path d="M1255,79.6H1270.8" stroke-width="1.6"/>
<path d="M1260.8,78.8V78H1265V78.8" stroke-width="1.2"/>
<path d="M1256.4,80.6L1257.6,93.6C1257.7,94.4 1258.2,94.8 1259,94.8H1266.8C1267.6,94.8 1268.1,94.4 1268.2,93.6L1269.4,80.6" stroke-width="1.1"/>
<path d="M1260.2,83.8V91.2M1262.9,83.8V91.2M1265.6,83.8V91.2" stroke-width="1.6"/>
</g>
<g font-size="10" text-anchor="middle">
<text x="1060.9" y="108.7" fill="#bcbec1">Group</text>
<text x="1125.7" y="108.7" fill="#bcbec1">UnGroup</text>
<text x="1197.4" y="108.7" fill="#30343a" stroke="#30343a" stroke-width="0.18">Duplicate</text>
<text x="1262.8" y="108.7" fill="#30343a" stroke="#30343a" stroke-width="0.18">Delete</text>
</g>
<path d="M1042.7,131.8H1050.3L1046.5,136.2Z" fill="#3c4148"/>
<text x="1060.2" y="138.3" font-size="14" fill="#30343a" letter-spacing="-0.1">Daisy Flower, Draw</text>
<text x="1102.2" y="174.2" font-size="12.3" fill="#30343a">Draw</text>
<text x="1102.2" y="214.4" font-size="12.3" fill="#30343a">Cut</text>
<g id="eye">
<path d="M1262.8,134.2C1264.8,131.2 1267.2,129.8 1269.9,129.8C1272.6,129.8 1275,131.2 1277,134.2C1275,137.2 1272.6,138.6 1269.9,138.6C1267.2,138.6 1264.8,137.2 1262.8,134.2Z" fill="none" stroke="#3c4148" stroke-width="1.3"/>
<circle cx="1269.9" cy="134.2" r="3.3" fill="#3c4148"/>
<circle cx="1269.2" cy="133.2" r="0.9" fill="#fff"/>
</g>
<use href="#eye" y="37"/>
<use href="#eye" y="77"/>
<!-- blank canvas -->
<text x="1115" y="788.8" font-size="10" fill="#30343a">Blank Canvas</text>
<path d="M1248.3,785C1250.2,782 1252.4,780.6 1255,780.6C1257.6,780.6 1259.8,782 1261.7,785C1259.8,788 1257.6,789.4 1255,789.4C1252.4,789.4 1250.2,788 1248.3,785Z" fill="none" stroke="#4b545c" stroke-width="1.3"/>
<circle cx="1255" cy="785" r="2.8" fill="#4b545c"/>
<path d="M1249.2,778.6L1261.8,791.7" stroke="#f4f5f7" stroke-width="2.6"/>
<path d="M1249.2,778.6L1261.8,791.7" stroke="#4b545c" stroke-width="1.2"/>
<!-- bottom tools -->
<g fill="none" stroke="#bcbec1" stroke-width="1.1">
<path d="M1056.6,820.6V815.2H1046.2V825.6H1051.8"/>
<circle cx="1057.4" cy="826.4" r="5.4"/>
<path d="M1052.4,824.4A5,5 0 0 1 1056.6,820.6V825.6H1052"/>
<path d="M1102.6,820.4V815.2H1091.6V826H1097.2A5.4,5.4 0 1 0 1102.6,820.4Z"/>
<rect x="1253.4" y="815.2" width="17.4" height="16.4" rx="2"/>
<circle cx="1262.2" cy="823.6" r="5.8" stroke-dasharray="2.2,1.6"/>
</g>
<g fill="none" stroke="#30343a" stroke-width="1.3" stroke-linejoin="round">
<g transform="rotate(50 1147.6 819.4)"><rect x="1142.6" y="816.6" width="10" height="5.6" rx="2.8" stroke-width="1.6"/></g>
<g transform="rotate(50 1154 827.7)"><rect x="1149" y="824.9" width="10" height="5.6" rx="2.8" stroke-width="1.6"/></g>
<path d="M1153.6,816.6L1154.8,815.4M1156.6,820.8L1157.8,819.8M1144.6,826.4L1143.4,827.4M1147.4,829.4L1146.4,830.6" stroke-width="0.9" stroke="#7a7e84"/>
<path d="M1196.9,823.6L1205.2,819.8L1213.5,823.6L1205.2,827.4Z"/>
<path d="M1196.9,827.2L1205.2,831.4L1213.5,827.2"/>
<path d="M1205.2,815V823.2M1202.6,820.6L1205.2,823.2L1207.8,820.6"/>
</g>
<g font-size="10" text-anchor="middle">
<text x="1054.4" y="845.8" fill="#bcbec1">Slice</text>
<text x="1100" y="845.8" fill="#bcbec1">Weld</text>
<text x="1150.4" y="845.8" fill="#30343a" stroke="#30343a" stroke-width="0.18">Detach</text>
<text x="1205.3" y="845.8" fill="#30343a" stroke="#30343a" stroke-width="0.18">Flatten</text>
<text x="1262.3" y="845.8" fill="#bcbec1">Contour</text>
</g>
<!-- thumbnails -->
<g transform="translate(1062,196) scale(0.0521)"><use href="#silh"/></g>
<g transform="translate(1062,156) scale(0.0521)"><use href="#drawlines"/></g>
<!-- annotation ellipse -->
<ellipse cx="1119.6" cy="171.3" rx="99.8" ry="75.4" fill="none" stroke="#000" stroke-width="3.6"/>
</svg>
</body></html>
